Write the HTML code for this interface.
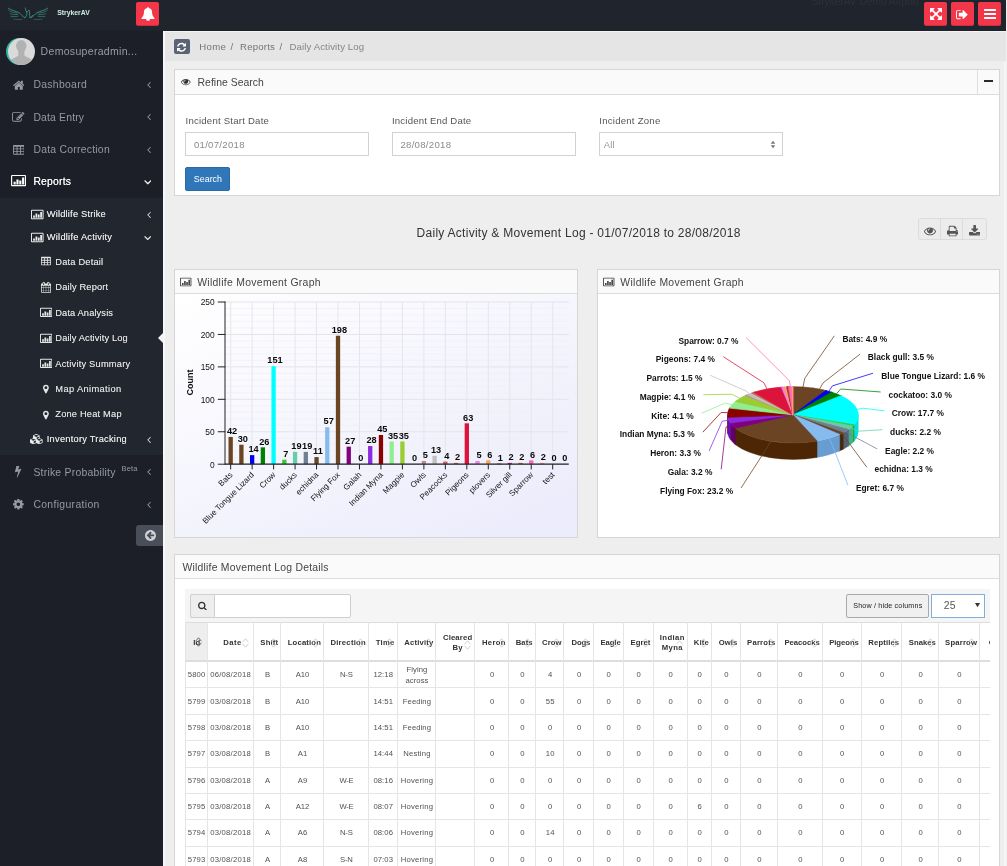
<!DOCTYPE html>
<html lang="en"><head><meta charset="utf-8"><title>StrykerAV - Daily Activity Log</title>
<style>
html,body{margin:0;padding:0}
body{width:1007px;height:866px;overflow:hidden;position:relative;background:#f1f1f1;font-family:"Liberation Sans",sans-serif;color:#444;-webkit-font-smoothing:antialiased}
*{box-sizing:border-box}
#wrap{position:absolute;left:0;top:0;width:1007px;height:866px;will-change:transform}
.abs,.ic,.t{position:absolute}
.t{white-space:nowrap;letter-spacing:.028em;line-height:1}
.b{font-weight:bold;letter-spacing:.01em}
#nav{position:absolute;left:0;top:0;width:1006px;height:31px;background:#20242d;border-bottom:1px solid #1e222b;overflow:hidden}
#side{position:absolute;left:0;top:31px;width:163px;height:835px;background:#1c1f28;overflow:hidden}
#main{position:absolute;left:164px;top:31px;width:842px;height:835px;background:#eeeeee;overflow:hidden}
.rbtn{position:absolute;top:2px;width:23px;height:23px;background:#f4364a;border-radius:2px;box-shadow:0 1px 0 #cc2e40}
.panel{position:absolute;background:#fff;border:1px solid #d6d6d6}
.ph{position:absolute;left:0;top:0;right:0;background:#fafafa;border-bottom:1px solid #dcdcdc}
.inp{position:absolute;height:23.5px;width:184px;border:1px solid #ccc;background:#fff}
</style></head><body><div id="wrap">
<div id="nav">
<svg class="ic" style="left:4px;top:2.8px" width="50" height="24" viewBox="0 0 1007 483"><g fill="none" stroke-linecap="round" stroke-linejoin="round"><g stroke="#41b9a0" stroke-width="13"><path d="M85 105 C150 150 230 160 300 195 C350 225 370 275 420 295"/><path d="M 880.0 105 C 815.0 150 735.0 160 665.0 195 C 615.0 225 595.0 275 545.0 295"/><path d="M420 295 C455 270 472 230 460 185 C440 150 425 125 430 100"/><path d="M460 185 C480 162 495 148 506 142 C520 180 514 240 520 295 C545 290 560 270 580 250"/></g><g stroke="#3aa892" stroke-width="10.5"><path d="M95 150 C150 185 200 195 262 200"/><path d="M125 215 C170 235 220 235 278 230"/><path d="M140 270 C180 277 230 277 278 268"/><path d="M 870.0 150 C 815.0 185 765.0 195 703.0 200"/><path d="M 840.0 215 C 795.0 235 745.0 235 687.0 230"/><path d="M 825.0 270 C 785.0 277 735.0 277 687.0 268"/></g><g stroke="#4f7b76" stroke-width="11"><path d="M200 325 C250 336 310 336 360 330"/><path d="M 765.0 325 C 715.0 336 655.0 336 605.0 330"/></g></g></svg>
<div class="t b" style="left:57.3px;top:9.9px;font-size:6.8px;color:#cdeee5;letter-spacing:0">StrykerAV</div>
<div class="rbtn" style="left:136px;width:23px"></div>
<svg class="ic" style="left:140.60px;top:7.40px;" width="14.00" height="14.00" viewBox="0 0 1792 1792"><path fill="#fff" d="M912 1696C912 1705 905 1712 896 1712C799 1712 720 1633 720 1536C720 1527 727 1520 736 1520C745 1520 752 1527 752 1536C752 1615 817 1680 896 1680C905 1680 912 1687 912 1696ZM1728 1408C1580 1283 1408 1059 1408 576C1408 384 1249 174 984 135C989 123 992 110 992 96C992 43 949 0 896 0C843 0 800 43 800 96C800 110 803 123 808 135C543 174 384 384 384 576C384 1059 212 1283 64 1408C64 1478 122 1536 192 1536H640C640 1677 755 1792 896 1792C1037 1792 1152 1677 1152 1536H1600C1670 1536 1728 1478 1728 1408Z"/></svg>
<div class="t" style="left:811.5px;top:-3.4px;font-size:10.2px;color:#2d313a;letter-spacing:0">StrykerAV Demo Airport</div>
<div class="rbtn" style="left:924px"></div>
<svg class="ic" style="left:929.50px;top:7.30px;" width="12.00" height="14.00" viewBox="0 0 1536 1792"><path fill="#fff" d="M1283 541 1427 685C1439 697 1455 704 1472 704C1480 704 1489 702 1497 699C1520 689 1536 666 1536 640V192C1536 157 1507 128 1472 128H1024C998 128 975 144 965 168C955 191 960 219 979 237L1123 381L768 736L413 381L557 237C576 219 581 191 571 168C561 144 538 128 512 128H64C29 128 0 157 0 192V640C0 666 16 689 40 699C47 702 56 704 64 704C81 704 97 697 109 685L253 541L608 896L253 1251L109 1107C91 1088 63 1083 40 1093C16 1103 0 1126 0 1152V1600C0 1635 29 1664 64 1664H512C538 1664 561 1648 571 1624C581 1601 576 1573 557 1555L413 1411L768 1056L1123 1411L979 1555C960 1573 955 1601 965 1624C975 1648 998 1664 1024 1664H1472C1507 1664 1536 1635 1536 1600V1152C1536 1126 1520 1103 1497 1093C1473 1083 1445 1088 1427 1107L1283 1251L928 896Z"/></svg>
<div class="rbtn" style="left:951px"></div>
<svg class="ic" style="left:956.37px;top:7.70px;" width="12.26" height="13.20" viewBox="0 0 1664 1792"><path fill="#fff" d="M640 1440C640 1403 601 1408 576 1408H288C200 1408 128 1336 128 1248V544C128 456 200 384 288 384H608C653 384 640 316 640 288C640 271 625 256 608 256H288C129 256 0 385 0 544V1248C0 1407 129 1536 288 1536H608C653 1536 640 1468 640 1440ZM1568 896C1568 879 1561 863 1549 851L1005 307C993 295 977 288 960 288C925 288 896 317 896 352V640H448C413 640 384 669 384 704V1088C384 1123 413 1152 448 1152H896V1440C896 1475 925 1504 960 1504C977 1504 993 1497 1005 1485L1549 941C1561 929 1568 913 1568 896Z"/></svg>
<div class="rbtn" style="left:978px"></div>
<svg class="ic" style="left:983.50px;top:7.30px;" width="12.00" height="14.00" viewBox="0 0 1536 1792"><path fill="#fff" d="M1536 1344C1536 1309 1507 1280 1472 1280H64C29 1280 0 1309 0 1344V1472C0 1507 29 1536 64 1536H1472C1507 1536 1536 1507 1536 1472ZM1536 832C1536 797 1507 768 1472 768H64C29 768 0 797 0 832V960C0 995 29 1024 64 1024H1472C1507 1024 1536 995 1536 960ZM1536 320C1536 285 1507 256 1472 256H64C29 256 0 285 0 320V448C0 483 29 512 64 512H1472C1507 512 1536 483 1536 448Z"/></svg>
</div>
<div id="side">
<div class="abs" style="left:5.8px;top:7px;width:27px;height:27px;border-radius:50%;background:#2fb5a0"></div>
<svg class="ic" style="left:8.2px;top:7px" width="27" height="27" viewBox="0 0 27 27">
<defs><clipPath id="avc"><circle cx="13.5" cy="13.5" r="13.5"/></clipPath></defs>
<circle cx="13.5" cy="13.5" r="13.5" fill="#dadada"/>
<g clip-path="url(#avc)" fill="#b2b2b2"><ellipse cx="13.3" cy="8" rx="5.2" ry="6.1"/><path d="M10.3 12 H16.400 V17.600 C19 20.200 24.500 20 25.600 24.500 V28 H1.400 V24.500 C2.500 20 8 20.200 10.300 17.600 Z"/></g></svg>
<div class="t" style="left:40.6px;top:15.48px;font-size:10.5px;color:#9a9da5;letter-spacing:0.313px;">Demosuperadmin...</div>
<div class="abs" style="left:0;top:166.6px;width:163px;height:257.6px;background:#22262f"></div>
<svg class="ic" style="left:12.80px;top:47.95px;" width="11.61" height="12.50" viewBox="0 0 1664 1792"><path fill="#9699a0" d="M1408 992C1408 990 1408 988 1407 986L832 512L257 986C257 988 256 990 256 992V1472C256 1507 285 1536 320 1536H704V1152H960V1536H1344C1379 1536 1408 1507 1408 1472ZM1631 923C1642 910 1640 889 1627 878L1408 696V288C1408 270 1394 256 1376 256H1184C1166 256 1152 270 1152 288V483L908 279C866 244 798 244 756 279L37 878C24 889 22 910 33 923L95 997C100 1003 108 1007 116 1008C125 1009 133 1006 140 1001L832 424L1524 1001C1530 1006 1537 1008 1545 1008C1546 1008 1547 1008 1548 1008C1556 1007 1564 1003 1569 997L1631 923Z"/></svg>
<div class="t" style="left:33.4px;top:49.23px;font-size:10.4px;color:#9699a0;letter-spacing:0.310px;">Dashboard</div>
<svg class="ic" style="left:146.64px;top:48.00px;" width="3.93" height="11.00" viewBox="0 0 640 1792"><path fill="#9699a0" d="M627 544C627 535 623 527 617 521L567 471C561 465 552 461 544 461C536 461 527 465 521 471L55 937C49 943 45 952 45 960C45 968 49 977 55 983L521 1449C527 1455 536 1459 544 1459C552 1459 561 1455 567 1449L617 1399C623 1393 627 1384 627 1376C627 1368 623 1359 617 1353L224 960L617 567C623 561 627 552 627 544Z"/></svg>
<svg class="ic" style="left:12.35px;top:80.25px;" width="12.50" height="12.50" viewBox="0 0 1792 1792"><path fill="#9699a0" d="M888 1184H832V1088H736V1032L852 916L1004 1068ZM1328 464C1337 473 1336 488 1327 497L977 847C968 856 953 857 944 848C935 839 936 824 945 815L1295 465C1304 456 1319 455 1328 464ZM1408 1058C1408 1045 1400 1034 1388 1029C1376 1024 1363 1026 1353 1036L1289 1100C1283 1106 1280 1114 1280 1122V1248C1280 1336 1208 1408 1120 1408H288C200 1408 128 1336 128 1248V416C128 328 200 256 288 256H1120C1135 256 1150 258 1165 262C1176 266 1188 263 1197 254L1246 205C1254 197 1257 187 1255 176C1253 166 1246 157 1237 153C1200 136 1160 128 1120 128H288C129 128 0 257 0 416V1248C0 1407 129 1536 288 1536H1120C1279 1536 1408 1407 1408 1248ZM1312 320 640 992V1280H928L1600 608ZM1756 452C1793 415 1793 353 1756 316L1604 164C1567 127 1505 127 1468 164L1376 256L1664 544L1756 452Z"/></svg>
<div class="t" style="left:33.4px;top:81.53px;font-size:10.4px;color:#9699a0;letter-spacing:0.171px;">Data Entry</div>
<svg class="ic" style="left:146.64px;top:80.30px;" width="3.93" height="11.00" viewBox="0 0 640 1792"><path fill="#9699a0" d="M627 544C627 535 623 527 617 521L567 471C561 465 552 461 544 461C536 461 527 465 521 471L55 937C49 943 45 952 45 960C45 968 49 977 55 983L521 1449C527 1455 536 1459 544 1459C552 1459 561 1455 567 1449L617 1399C623 1393 627 1384 627 1376C627 1368 623 1359 617 1353L224 960L617 567C623 561 627 552 627 544Z"/></svg>
<svg class="ic" style="left:12.80px;top:112.65px;" width="11.61" height="12.50" viewBox="0 0 1664 1792"><path fill="#9699a0" d="M512 1376C512 1394 498 1408 480 1408H160C142 1408 128 1394 128 1376V1184C128 1166 142 1152 160 1152H480C498 1152 512 1166 512 1184V1376ZM512 992C512 1010 498 1024 480 1024H160C142 1024 128 1010 128 992V800C128 782 142 768 160 768H480C498 768 512 782 512 800V992ZM1024 1376C1024 1394 1010 1408 992 1408H672C654 1408 640 1394 640 1376V1184C640 1166 654 1152 672 1152H992C1010 1152 1024 1166 1024 1184V1376ZM512 608C512 626 498 640 480 640H160C142 640 128 626 128 608V416C128 398 142 384 160 384H480C498 384 512 398 512 416V608ZM1024 992C1024 1010 1010 1024 992 1024H672C654 1024 640 1010 640 992V800C640 782 654 768 672 768H992C1010 768 1024 782 1024 800V992ZM1536 1376C1536 1394 1522 1408 1504 1408H1184C1166 1408 1152 1394 1152 1376V1184C1152 1166 1166 1152 1184 1152H1504C1522 1152 1536 1166 1536 1184V1376ZM1024 608C1024 626 1010 640 992 640H672C654 640 640 626 640 608V416C640 398 654 384 672 384H992C1010 384 1024 398 1024 416V608ZM1536 992C1536 1010 1522 1024 1504 1024H1184C1166 1024 1152 1010 1152 992V800C1152 782 1166 768 1184 768H1504C1522 768 1536 782 1536 800V992ZM1536 608C1536 626 1522 640 1504 640H1184C1166 640 1152 626 1152 608V416C1152 398 1166 384 1184 384H1504C1522 384 1536 398 1536 416V608ZM1664 288C1664 200 1592 128 1504 128H160C72 128 0 200 0 288V1376C0 1464 72 1536 160 1536H1504C1592 1536 1664 1464 1664 1376Z"/></svg>
<div class="t" style="left:33.4px;top:113.93px;font-size:10.4px;color:#9699a0;letter-spacing:0.252px;">Data Correction</div>
<svg class="ic" style="left:146.64px;top:112.70px;" width="3.93" height="11.00" viewBox="0 0 640 1792"><path fill="#9699a0" d="M627 544C627 535 623 527 617 521L567 471C561 465 552 461 544 461C536 461 527 465 521 471L55 937C49 943 45 952 45 960C45 968 49 977 55 983L521 1449C527 1455 536 1459 544 1459C552 1459 561 1455 567 1449L617 1399C623 1393 627 1384 627 1376C627 1368 623 1359 617 1353L224 960L617 567C623 561 627 552 627 544Z"/></svg>
<svg class="ic" style="left:11.16px;top:143.30px" width="15.09" height="13.20" viewBox="0 0 2048 1792"><path fill="#ffffff" fill-rule="evenodd" d="M160 128 h1728 q66 0 113 47 t47 113 v1216 q0 66 -47 113 t-113 47 h-1728 q-66 0 -113 -47 t-47 -113 v-1216 q0 -66 47 -113 t113 -47 z M192 288 q-13 0 -22.500 9.500 t-9.500 22.500 v1152 q0 13 9.500 22.500 t22.500 9.500 h1664 q13 0 22.500 -9.500 t9.500 -22.500 v-1152 q0 -13 -9.500 -22.500 t-22.500 -9.500 z M352 1056 h288 v384 h-288 z M736 736 h288 v704 h-288 z M1120 896 h288 v544 h-288 z M1504 480 h288 v960 h-288 z"/></svg>
<div class="t" style="left:33.4px;top:146.23px;font-size:10.4px;color:#ffffff;letter-spacing:0.197px;text-shadow:0 0 .6px rgba(255,255,255,.8);">Reports</div>
<svg class="ic" style="left:143.64px;top:144.90px;stroke:#ffffff;stroke-width:70" width="7.71" height="12.00" viewBox="0 0 1152 1792"><path fill="#ffffff" d="M1075 736C1075 728 1071 719 1065 713L1015 663C1009 657 1000 653 992 653C984 653 975 657 969 663L576 1056L183 663C177 657 168 653 160 653C151 653 143 657 137 663L87 713C81 719 77 728 77 736C77 744 81 753 87 759L553 1225C559 1231 568 1235 576 1235C584 1235 593 1231 599 1225L1065 759C1071 753 1075 744 1075 736Z"/></svg>
<svg class="ic" style="left:15.48px;top:434.35px;" width="6.25" height="12.50" viewBox="0 0 896 1792"><path fill="#9699a0" d="M885 566C876 557 864 551 851 551C847 551 843 552 839 553L443 651L614 188C617 182 619 176 619 170C619 147 599 128 574 128H246C225 128 207 141 202 160L1 985C-2 999 2 1014 14 1024C22 1031 34 1035 45 1035C49 1035 53 1035 57 1034L463 933L266 1741C261 1762 274 1783 296 1790C301 1791 306 1792 310 1792C328 1792 344 1782 352 1767L892 610C899 595 896 578 885 566Z"/></svg>
<div class="t" style="left:33.4px;top:436.53px;font-size:10.4px;color:#9699a0;letter-spacing:0.240px;">Strike Probability</div>
<svg class="ic" style="left:146.64px;top:435.30px;" width="3.93" height="11.00" viewBox="0 0 640 1792"><path fill="#9699a0" d="M627 544C627 535 623 527 617 521L567 471C561 465 552 461 544 461C536 461 527 465 521 471L55 937C49 943 45 952 45 960C45 968 49 977 55 983L521 1449C527 1455 536 1459 544 1459C552 1459 561 1455 567 1449L617 1399C623 1393 627 1384 627 1376C627 1368 623 1359 617 1353L224 960L617 567C623 561 627 552 627 544Z"/></svg>
<svg class="ic" style="left:13.24px;top:466.65px;" width="10.71" height="12.50" viewBox="0 0 1536 1792"><path fill="#9699a0" d="M1024 896C1024 1037 909 1152 768 1152C627 1152 512 1037 512 896C512 755 627 640 768 640C909 640 1024 755 1024 896ZM1536 787C1536 770 1524 754 1507 751L1324 723C1314 690 1300 657 1283 625C1317 578 1354 534 1388 488C1393 481 1396 474 1396 465C1396 457 1394 449 1389 443C1347 384 1277 322 1224 273C1217 267 1208 263 1199 263C1190 263 1181 266 1175 272L1033 379C1004 364 974 352 943 342L915 158C913 141 897 128 879 128H657C639 128 625 140 621 156C605 216 599 281 592 342C561 352 530 365 501 380L363 273C355 267 346 263 337 263C303 263 168 409 144 442C139 449 135 456 135 465C135 474 139 482 145 489C182 534 218 579 252 627C236 657 223 687 213 719L27 747C12 750 0 768 0 783V1005C0 1022 12 1038 29 1041L212 1068C222 1102 236 1135 253 1167C219 1214 182 1258 148 1304C143 1311 140 1318 140 1327C140 1335 142 1343 147 1350C189 1408 259 1470 312 1518C319 1525 328 1529 337 1529C346 1529 355 1526 362 1520L503 1413C532 1428 562 1440 593 1450L621 1634C623 1651 639 1664 657 1664H879C897 1664 911 1652 915 1636C931 1576 937 1511 944 1450C975 1440 1006 1427 1035 1412L1173 1520C1181 1525 1190 1529 1199 1529C1233 1529 1368 1382 1392 1350C1398 1343 1401 1336 1401 1327C1401 1318 1397 1309 1391 1302C1354 1257 1318 1213 1284 1164C1300 1135 1312 1105 1323 1073L1508 1045C1524 1042 1536 1024 1536 1009Z"/></svg>
<div class="t" style="left:33.4px;top:468.83px;font-size:10.4px;color:#9699a0;letter-spacing:0.344px;">Configuration</div>
<svg class="ic" style="left:146.64px;top:467.60px;" width="3.93" height="11.00" viewBox="0 0 640 1792"><path fill="#9699a0" d="M627 544C627 535 623 527 617 521L567 471C561 465 552 461 544 461C536 461 527 465 521 471L55 937C49 943 45 952 45 960C45 968 49 977 55 983L521 1449C527 1455 536 1459 544 1459C552 1459 561 1455 567 1449L617 1399C623 1393 627 1384 627 1376C627 1368 623 1359 617 1353L224 960L617 567C623 561 627 552 627 544Z"/></svg>
<div class="t" style="left:121.5px;top:433.73px;font-size:7.6px;color:#9699a0;letter-spacing:0.119px;">Beta</div>
<svg class="ic" style="left:31.11px;top:177.60px" width="12.57" height="11.00" viewBox="0 0 2048 1792"><path fill="#ececec" fill-rule="evenodd" d="M160 128 h1728 q66 0 113 47 t47 113 v1216 q0 66 -47 113 t-113 47 h-1728 q-66 0 -113 -47 t-47 -113 v-1216 q0 -66 47 -113 t113 -47 z M192 288 q-13 0 -22.500 9.500 t-9.500 22.500 v1152 q0 13 9.500 22.500 t22.500 9.500 h1664 q13 0 22.500 -9.500 t9.500 -22.500 v-1152 q0 -13 -9.500 -22.500 t-22.500 -9.500 z M352 1056 h288 v384 h-288 z M736 736 h288 v704 h-288 z M1120 896 h288 v544 h-288 z M1504 480 h288 v960 h-288 z"/></svg>
<div class="t" style="left:46.8px;top:179.30px;font-size:9.3px;color:#ececec;letter-spacing:0.185px;text-shadow:0 0 .5px rgba(255,255,255,.6);">Wildlife Strike</div>
<svg class="ic" style="left:146.64px;top:177.90px;" width="3.93" height="11.00" viewBox="0 0 640 1792"><path fill="#dcdcdc" d="M627 544C627 535 623 527 617 521L567 471C561 465 552 461 544 461C536 461 527 465 521 471L55 937C49 943 45 952 45 960C45 968 49 977 55 983L521 1449C527 1455 536 1459 544 1459C552 1459 561 1455 567 1449L617 1399C623 1393 627 1384 627 1376C627 1368 623 1359 617 1353L224 960L617 567C623 561 627 552 627 544Z"/></svg>
<svg class="ic" style="left:31.11px;top:200.70px" width="12.57" height="11.00" viewBox="0 0 2048 1792"><path fill="#ececec" fill-rule="evenodd" d="M160 128 h1728 q66 0 113 47 t47 113 v1216 q0 66 -47 113 t-113 47 h-1728 q-66 0 -113 -47 t-47 -113 v-1216 q0 -66 47 -113 t113 -47 z M192 288 q-13 0 -22.500 9.500 t-9.500 22.500 v1152 q0 13 9.500 22.500 t22.500 9.500 h1664 q13 0 22.500 -9.500 t9.500 -22.500 v-1152 q0 -13 -9.500 -22.500 t-22.500 -9.500 z M352 1056 h288 v384 h-288 z M736 736 h288 v704 h-288 z M1120 896 h288 v544 h-288 z M1504 480 h288 v960 h-288 z"/></svg>
<div class="t" style="left:46.8px;top:202.40px;font-size:9.3px;color:#ececec;letter-spacing:0.230px;text-shadow:0 0 .5px rgba(255,255,255,.6);">Wildlife Activity</div>
<svg class="ic" style="left:143.77px;top:201.00px;stroke:#ececec;stroke-width:60" width="7.46" height="11.60" viewBox="0 0 1152 1792"><path fill="#ececec" d="M1075 736C1075 728 1071 719 1065 713L1015 663C1009 657 1000 653 992 653C984 653 975 657 969 663L576 1056L183 663C177 657 168 653 160 653C151 653 143 657 137 663L87 713C81 719 77 728 77 736C77 744 81 753 87 759L553 1225C559 1231 568 1235 576 1235C584 1235 593 1231 599 1225L1065 759C1071 753 1075 744 1075 736Z"/></svg>
<svg class="ic" style="left:30.31px;top:402.70px;" width="13.37" height="10.40" viewBox="0 0 2304 1792"><path fill="#ececec" d="M640 1632V1290L1024 1126V1440ZM576 1178 172 1005 576 832 980 1005ZM1664 1632V1290L2048 1126V1440ZM1600 1178 1196 1005 1600 832 2004 1005ZM1152 885V618L1536 454V720ZM1088 506 647 317 1088 128 1529 317ZM2176 1024C2176 973 2146 927 2098 906L1664 720V320C1664 269 1633 223 1586 202L1138 10C1122 3 1105 0 1088 0C1071 0 1054 3 1038 10L590 202C543 223 512 269 512 320V720L78 906C31 927 0 973 0 1024V1440C0 1488 27 1533 71 1554L519 1778C537 1788 556 1792 576 1792C596 1792 615 1788 633 1778L1081 1554C1084 1553 1086 1552 1088 1550C1090 1552 1092 1553 1095 1554L1543 1778C1561 1788 1580 1792 1600 1792C1620 1792 1639 1788 1657 1778L2105 1554C2149 1533 2176 1488 2176 1440Z"/></svg>
<div class="t" style="left:46.8px;top:403.90px;font-size:9.3px;color:#ececec;letter-spacing:0.234px;text-shadow:0 0 .5px rgba(255,255,255,.6);">Inventory Tracking</div>
<svg class="ic" style="left:146.64px;top:402.50px;" width="3.93" height="11.00" viewBox="0 0 640 1792"><path fill="#dcdcdc" d="M627 544C627 535 623 527 617 521L567 471C561 465 552 461 544 461C536 461 527 465 521 471L55 937C49 943 45 952 45 960C45 968 49 977 55 983L521 1449C527 1455 536 1459 544 1459C552 1459 561 1455 567 1449L617 1399C623 1393 627 1384 627 1376C627 1368 623 1359 617 1353L224 960L617 567C623 561 627 552 627 544Z"/></svg>
<svg class="ic" style="left:40.79px;top:225.40px;" width="10.03" height="10.80" viewBox="0 0 1664 1792"><path fill="#e6e6e6" d="M512 1376C512 1394 498 1408 480 1408H160C142 1408 128 1394 128 1376V1184C128 1166 142 1152 160 1152H480C498 1152 512 1166 512 1184V1376ZM512 992C512 1010 498 1024 480 1024H160C142 1024 128 1010 128 992V800C128 782 142 768 160 768H480C498 768 512 782 512 800V992ZM1024 1376C1024 1394 1010 1408 992 1408H672C654 1408 640 1394 640 1376V1184C640 1166 654 1152 672 1152H992C1010 1152 1024 1166 1024 1184V1376ZM512 608C512 626 498 640 480 640H160C142 640 128 626 128 608V416C128 398 142 384 160 384H480C498 384 512 398 512 416V608ZM1024 992C1024 1010 1010 1024 992 1024H672C654 1024 640 1010 640 992V800C640 782 654 768 672 768H992C1010 768 1024 782 1024 800V992ZM1536 1376C1536 1394 1522 1408 1504 1408H1184C1166 1408 1152 1394 1152 1376V1184C1152 1166 1166 1152 1184 1152H1504C1522 1152 1536 1166 1536 1184V1376ZM1024 608C1024 626 1010 640 992 640H672C654 640 640 626 640 608V416C640 398 654 384 672 384H992C1010 384 1024 398 1024 416V608ZM1536 992C1536 1010 1522 1024 1504 1024H1184C1166 1024 1152 1010 1152 992V800C1152 782 1166 768 1184 768H1504C1522 768 1536 782 1536 800V992ZM1536 608C1536 626 1522 640 1504 640H1184C1166 640 1152 626 1152 608V416C1152 398 1166 384 1184 384H1504C1522 384 1536 398 1536 416V608ZM1664 288C1664 200 1592 128 1504 128H160C72 128 0 200 0 288V1376C0 1464 72 1536 160 1536H1504C1592 1536 1664 1464 1664 1376Z"/></svg>
<div class="t" style="left:55.3px;top:226.50px;font-size:9.3px;color:#e6e6e6;letter-spacing:0.178px;text-shadow:0 0 .5px rgba(255,255,255,.5);">Data Detail</div>
<svg class="ic" style="left:40.79px;top:251.20px;" width="10.03" height="10.80" viewBox="0 0 1664 1792"><path fill="#e6e6e6" d="M128 1664V1376H416V1664ZM480 1664V1376H800V1664ZM128 1312V992H416V1312ZM480 1312V992H800V1312ZM128 928V640H416V928ZM864 1664V1376H1184V1664ZM480 928V640H800V928ZM1248 1664V1376H1536V1664ZM864 1312V992H1184V1312ZM512 448C512 465 497 480 480 480H416C399 480 384 465 384 448V160C384 143 399 128 416 128H480C497 128 512 143 512 160V448ZM1248 1312V992H1536V1312ZM864 928V640H1184V928ZM1248 928V640H1536V928ZM1280 448C1280 465 1265 480 1248 480H1184C1167 480 1152 465 1152 448V160C1152 143 1167 128 1184 128H1248C1265 128 1280 143 1280 160V448ZM1664 384C1664 314 1606 256 1536 256H1408V160C1408 72 1336 0 1248 0H1184C1096 0 1024 72 1024 160V256H640V160C640 72 568 0 480 0H416C328 0 256 72 256 160V256H128C58 256 0 314 0 384V1664C0 1734 58 1792 128 1792H1536C1606 1792 1664 1734 1664 1664Z"/></svg>
<div class="t" style="left:55.3px;top:252.30px;font-size:9.3px;color:#e6e6e6;letter-spacing:0.157px;text-shadow:0 0 .5px rgba(255,255,255,.5);">Daily Report</div>
<svg class="ic" style="left:39.63px;top:276.10px" width="12.34" height="10.80" viewBox="0 0 2048 1792"><path fill="#e6e6e6" fill-rule="evenodd" d="M160 128 h1728 q66 0 113 47 t47 113 v1216 q0 66 -47 113 t-113 47 h-1728 q-66 0 -113 -47 t-47 -113 v-1216 q0 -66 47 -113 t113 -47 z M192 288 q-13 0 -22.500 9.500 t-9.500 22.500 v1152 q0 13 9.500 22.500 t22.500 9.500 h1664 q13 0 22.500 -9.500 t9.500 -22.500 v-1152 q0 -13 -9.500 -22.500 t-22.500 -9.500 z M352 1056 h288 v384 h-288 z M736 736 h288 v704 h-288 z M1120 896 h288 v544 h-288 z M1504 480 h288 v960 h-288 z"/></svg>
<div class="t" style="left:55.3px;top:277.70px;font-size:9.3px;color:#e6e6e6;letter-spacing:0.111px;text-shadow:0 0 .5px rgba(255,255,255,.5);">Data Analysis</div>
<svg class="ic" style="left:39.63px;top:301.60px" width="12.34" height="10.80" viewBox="0 0 2048 1792"><path fill="#e6e6e6" fill-rule="evenodd" d="M160 128 h1728 q66 0 113 47 t47 113 v1216 q0 66 -47 113 t-113 47 h-1728 q-66 0 -113 -47 t-47 -113 v-1216 q0 -66 47 -113 t113 -47 z M192 288 q-13 0 -22.500 9.500 t-9.500 22.500 v1152 q0 13 9.500 22.500 t22.500 9.500 h1664 q13 0 22.500 -9.500 t9.500 -22.500 v-1152 q0 -13 -9.500 -22.500 t-22.500 -9.500 z M352 1056 h288 v384 h-288 z M736 736 h288 v704 h-288 z M1120 896 h288 v544 h-288 z M1504 480 h288 v960 h-288 z"/></svg>
<div class="t" style="left:55.3px;top:303.20px;font-size:9.3px;color:#e6e6e6;letter-spacing:0.126px;text-shadow:0 0 .5px rgba(255,255,255,.5);">Daily Activity Log</div>
<svg class="ic" style="left:39.63px;top:327.00px" width="12.34" height="10.80" viewBox="0 0 2048 1792"><path fill="#e6e6e6" fill-rule="evenodd" d="M160 128 h1728 q66 0 113 47 t47 113 v1216 q0 66 -47 113 t-113 47 h-1728 q-66 0 -113 -47 t-47 -113 v-1216 q0 -66 47 -113 t113 -47 z M192 288 q-13 0 -22.500 9.500 t-9.500 22.500 v1152 q0 13 9.500 22.500 t22.500 9.500 h1664 q13 0 22.500 -9.500 t9.500 -22.500 v-1152 q0 -13 -9.500 -22.500 t-22.500 -9.500 z M352 1056 h288 v384 h-288 z M736 736 h288 v704 h-288 z M1120 896 h288 v544 h-288 z M1504 480 h288 v960 h-288 z"/></svg>
<div class="t" style="left:55.3px;top:328.60px;font-size:9.3px;color:#e6e6e6;letter-spacing:0.200px;text-shadow:0 0 .5px rgba(255,255,255,.5);">Activity Summary</div>
<svg class="ic" style="left:42.89px;top:353.20px;" width="5.83" height="10.20" viewBox="0 0 1024 1792"><path fill="#e6e6e6" d="M768 640C768 781 653 896 512 896C371 896 256 781 256 640C256 499 371 384 512 384C653 384 768 499 768 640ZM1024 640C1024 357 795 128 512 128C229 128 0 357 0 640C0 701 7 764 33 819L398 1593C418 1637 464 1664 512 1664C560 1664 606 1637 627 1593L991 819C1017 764 1024 701 1024 640Z"/></svg>
<div class="t" style="left:55.3px;top:354.00px;font-size:9.3px;color:#e6e6e6;letter-spacing:0.369px;text-shadow:0 0 .5px rgba(255,255,255,.5);">Map Animation</div>
<svg class="ic" style="left:42.89px;top:378.60px;" width="5.83" height="10.20" viewBox="0 0 1024 1792"><path fill="#e6e6e6" d="M768 640C768 781 653 896 512 896C371 896 256 781 256 640C256 499 371 384 512 384C653 384 768 499 768 640ZM1024 640C1024 357 795 128 512 128C229 128 0 357 0 640C0 701 7 764 33 819L398 1593C418 1637 464 1664 512 1664C560 1664 606 1637 627 1593L991 819C1017 764 1024 701 1024 640Z"/></svg>
<div class="t" style="left:55.3px;top:379.40px;font-size:9.3px;color:#e6e6e6;letter-spacing:0.181px;text-shadow:0 0 .5px rgba(255,255,255,.5);">Zone Heat Map</div>
<div class="abs" style="left:158.2px;top:302.2px;width:0;height:0;border-top:5px solid transparent;border-bottom:5px solid transparent;border-right:5px solid #f1f1f1"></div>
<div class="abs" style="left:136px;top:494px;width:27px;height:21px;background:#4a4e59;border-radius:3px 0 0 3px"></div>
<svg class="ic" style="left:144.71px;top:498.20px;" width="10.97" height="12.80" viewBox="0 0 1536 1792"><path fill="#cfd0d4" d="M1280 960C1280 995 1251 1024 1216 1024H714L903 1213C915 1225 921 1241 921 1258C921 1275 915 1291 903 1303L812 1394C800 1406 784 1412 767 1412C750 1412 734 1406 722 1394L360 1032L269 941C257 929 251 913 251 896C251 879 257 863 269 851L360 760L722 398C734 386 750 380 767 380C784 380 800 386 812 398L903 489C915 501 922 517 922 534C922 551 915 567 903 579L714 768H1216C1251 768 1280 797 1280 832V960ZM1536 896C1536 472 1192 128 768 128C344 128 0 472 0 896C0 1320 344 1664 768 1664C1192 1664 1536 1320 1536 896Z"/></svg>
</div>
<div class="abs" style="left:163px;top:31px;width:1px;height:835px;background:#f6f6f6"></div>
<div id="main">
<div class="abs" style="left:0.00px;top:0.00px;width:842.00px;height:30.00px;background:#e5e5e5"></div>
<div class="abs" style="left:0.00px;top:0.00px;width:1.00px;height:835.00px;background:#f7f7f7"></div>
<div class="abs" style="left:0.00px;top:0.00px;width:842.00px;height:1.00px;background:#f3f3f3"></div>
<div class="abs" style="left:840.00px;top:31.00px;width:2.00px;height:804.00px;background:#f5f5f5"></div>
<div class="abs" style="left:9.60px;top:8.40px;width:16.20px;height:14.20px;background:#5a6276;border-radius:2px"></div>
<svg class="ic" style="left:13.16px;top:10.70px;" width="9.09" height="10.60" viewBox="0 0 1536 1792"><path fill="#fff" d="M1511 1056C1511 1039 1497 1024 1479 1024H1287C1272 1024 1262 1033 1257 1047C1240 1087 1228 1125 1204 1164C1111 1316 946 1408 768 1408C639 1408 514 1358 420 1270L557 1133C569 1121 576 1105 576 1088C576 1053 547 1024 512 1024H64C29 1024 0 1053 0 1088V1536C0 1571 29 1600 64 1600C81 1600 97 1593 109 1581L238 1452C380 1587 569 1664 764 1664C1133 1664 1425 1417 1510 1063C1511 1061 1511 1058 1511 1056ZM1536 256C1536 221 1507 192 1472 192C1455 192 1439 199 1427 211L1297 340C1155 206 964 128 768 128C399 128 104 374 18 729C18 731 18 734 18 736C18 753 32 768 50 768H249C264 768 274 759 279 745C296 705 308 667 332 628C425 476 590 384 768 384C897 384 1022 433 1117 521L979 659C967 671 960 687 960 704C960 739 989 768 1024 768H1472C1507 768 1536 739 1536 704Z"/></svg>
<div class="t" style="left:35.20px;top:11.37px;font-size:9.6px;color:#747474;letter-spacing:0.381px;">Home</div>
<div class="t" style="left:66.40px;top:11.37px;font-size:9.6px;color:#747474;letter-spacing:0.852px;">/</div>
<div class="t" style="left:76.10px;top:11.37px;font-size:9.6px;color:#747474;letter-spacing:0.181px;">Reports</div>
<div class="t" style="left:115.60px;top:11.37px;font-size:9.6px;color:#747474;letter-spacing:0.852px;">/</div>
<div class="t" style="left:125.40px;top:11.37px;font-size:9.6px;color:#858585;letter-spacing:0.130px;">Daily Activity Log</div>
<div class="panel" style="left:10.00px;top:38.00px;width:826.00px;height:126.60px"><div class="ph" style="height:25.20px"></div></div>
<svg class="ic" style="left:17.20px;top:46.20px;" width="9.60" height="9.60" viewBox="0 0 1792 1792"><path fill="#333" d="M1664 960C1493 1224 1217 1408 896 1408C575 1408 299 1224 128 960C223 813 353 687 509 607C469 675 448 753 448 832C448 1079 649 1280 896 1280C1143 1280 1344 1079 1344 832C1344 753 1323 675 1283 607C1439 687 1569 813 1664 960ZM944 576C944 602 922 624 896 624C782 624 688 718 688 832C688 858 666 880 640 880C614 880 592 858 592 832C592 665 729 528 896 528C922 528 944 550 944 576ZM1792 960C1792 935 1784 912 1772 891C1588 589 1251 384 896 384C541 384 204 589 20 891C8 912 0 935 0 960C0 985 8 1008 20 1029C204 1331 541 1536 896 1536C1251 1536 1588 1332 1772 1029C1784 1008 1792 985 1792 960Z"/></svg>
<div class="t" style="left:33.60px;top:46.53px;font-size:10.4px;color:#444;letter-spacing:0.025px;">Refine Search</div>
<div class="abs" style="left:813.00px;top:39.00px;width:1.00px;height:24.00px;background:#e0e0e0"></div>
<div class="abs" style="left:820.00px;top:49.30px;width:9.00px;height:2.20px;background:#2a2a2a"></div>
<div class="t" style="left:21.50px;top:85.17px;font-size:9.6px;color:#555;letter-spacing:0.217px;">Incident Start Date</div>
<div class="abs" style="left:21.30px;top:101.40px;width:184.00px;height:23.50px;background:#fff;border:1px solid #d2d2d2"></div>
<div class="t" style="left:29.90px;top:109.47px;font-size:9.6px;color:#8a8a8a;letter-spacing:0.291px;">01/07/2018</div>
<div class="t" style="left:228.00px;top:85.17px;font-size:9.6px;color:#555;letter-spacing:0.179px;">Incident End Date</div>
<div class="abs" style="left:227.80px;top:101.40px;width:184.00px;height:23.50px;background:#fff;border:1px solid #d2d2d2"></div>
<div class="t" style="left:236.40px;top:109.47px;font-size:9.6px;color:#8a8a8a;letter-spacing:0.291px;">28/08/2018</div>
<div class="t" style="left:435.30px;top:85.17px;font-size:9.6px;color:#555;letter-spacing:0.233px;">Incident Zone</div>
<div class="abs" style="left:435.10px;top:101.40px;width:184.00px;height:23.50px;background:#fff;border:1px solid #d2d2d2"></div>
<div class="t" style="left:439.70px;top:109.47px;font-size:9.6px;color:#999;letter-spacing:0.083px;">All</div>
<svg class="ic" style="left:605.60px;top:109px" width="6" height="9" viewBox="0 0 6 9"><path fill="#777" d="M3 0.800 L5.300 3.700 H0.700 z M3 8.200 L5.300 5.300 H0.700 z"/></svg>
<div class="abs" style="left:21.30px;top:136.20px;width:45.10px;height:23.60px;background:#2f77b8;border:1px solid #2a69a4;border-radius:2px"></div>
<div class="t" style="left:-156.10px;width:400px;text-align:center;top:144.17px;font-size:8.9px;color:#fff;letter-spacing:-0.003px;">Search</div>
<div class="t" style="left:214.60px;width:400px;text-align:center;top:196.44px;font-size:12px;color:#333;letter-spacing:0.271px;">Daily Activity &amp; Movement Log - 01/07/2018 to 28/08/2018</div>
<div class="abs" style="left:753.60px;top:187.40px;width:69.20px;height:22.00px;background:#ececec;border:1px solid #dcdcdc;border-radius:3px"></div>
<div class="abs" style="left:775.50px;top:188.40px;width:1.00px;height:20.00px;background:#dcdcdc"></div>
<div class="abs" style="left:797.50px;top:188.40px;width:1.00px;height:20.00px;background:#dcdcdc"></div>
<svg class="ic" style="left:759.80px;top:193.60px;" width="12.00" height="12.00" viewBox="0 0 1792 1792"><path fill="#555" d="M1664 960C1493 1224 1217 1408 896 1408C575 1408 299 1224 128 960C223 813 353 687 509 607C469 675 448 753 448 832C448 1079 649 1280 896 1280C1143 1280 1344 1079 1344 832C1344 753 1323 675 1283 607C1439 687 1569 813 1664 960ZM944 576C944 602 922 624 896 624C782 624 688 718 688 832C688 858 666 880 640 880C614 880 592 858 592 832C592 665 729 528 896 528C922 528 944 550 944 576ZM1792 960C1792 935 1784 912 1772 891C1588 589 1251 384 896 384C541 384 204 589 20 891C8 912 0 935 0 960C0 985 8 1008 20 1029C204 1331 541 1536 896 1536C1251 1536 1588 1332 1772 1029C1784 1008 1792 985 1792 960Z"/></svg>
<svg class="ic" style="left:782.84px;top:193.50px;" width="11.33" height="12.20" viewBox="0 0 1664 1792"><path fill="#555" d="M384 1536V1280H1280V1536ZM384 896V256H1024V416C1024 469 1067 512 1120 512H1280V896ZM1536 960C1536 995 1507 1024 1472 1024C1437 1024 1408 995 1408 960C1408 925 1437 896 1472 896C1507 896 1536 925 1536 960ZM1664 960C1664 855 1577 768 1472 768H1408V512C1408 459 1378 386 1340 348L1188 196C1150 158 1077 128 1024 128H352C299 128 256 171 256 224V768H192C87 768 0 855 0 960V1376C0 1393 15 1408 32 1408H256V1568C256 1621 299 1664 352 1664H1312C1365 1664 1408 1621 1408 1568V1408H1632C1649 1408 1664 1393 1664 1376Z"/></svg>
<svg class="ic" style="left:804.94px;top:193.50px;" width="11.33" height="12.20" viewBox="0 0 1664 1792"><path fill="#555" d="M1280 1344C1280 1379 1251 1408 1216 1408C1181 1408 1152 1379 1152 1344C1152 1309 1181 1280 1216 1280C1251 1280 1280 1309 1280 1344ZM1536 1344C1536 1379 1507 1408 1472 1408C1437 1408 1408 1379 1408 1344C1408 1309 1437 1280 1472 1280C1507 1280 1536 1309 1536 1344ZM1664 1120C1664 1067 1621 1024 1568 1024H1104L968 1160C931 1196 883 1216 832 1216C781 1216 733 1196 696 1160L561 1024H96C43 1024 0 1067 0 1120V1440C0 1493 43 1536 96 1536H1568C1621 1536 1664 1493 1664 1440ZM1339 551C1329 528 1306 512 1280 512H1024V64C1024 29 995 0 960 0H704C669 0 640 29 640 64V512H384C358 512 335 528 325 551C315 575 320 603 339 621L787 1069C799 1082 816 1088 832 1088C848 1088 865 1082 877 1069L1325 621C1344 603 1349 575 1339 551Z"/></svg>
<div class="panel" style="left:10.00px;top:237.60px;width:404.00px;height:269.40px"><div class="ph" style="height:24.40px"></div></div>
<svg class="ic" style="left:16.29px;top:245.60px" width="11.43" height="10.00" viewBox="0 0 2048 1792"><path fill="#444" fill-rule="evenodd" d="M160 128 h1728 q66 0 113 47 t47 113 v1216 q0 66 -47 113 t-113 47 h-1728 q-66 0 -113 -47 t-47 -113 v-1216 q0 -66 47 -113 t113 -47 z M192 288 q-13 0 -22.500 9.500 t-9.500 22.500 v1152 q0 13 9.500 22.500 t22.500 9.500 h1664 q13 0 22.500 -9.500 t9.500 -22.500 v-1152 q0 -13 -9.500 -22.500 t-22.500 -9.500 z M352 1056 h288 v384 h-288 z M736 736 h288 v704 h-288 z M1120 896 h288 v544 h-288 z M1504 480 h288 v960 h-288 z"/></svg>
<div class="t" style="left:33.20px;top:246.83px;font-size:10.4px;color:#444;letter-spacing:0.304px;">Wildlife Movement Graph</div>
<svg class="ic" style="left:11.00px;top:263.00px" width="402.00" height="243.00" viewBox="175 294 402.00 243.00">
<defs><linearGradient id="bg1" x1="0" y1="0" x2="0.8" y2="1"><stop offset="0" stop-color="#ffffff"/><stop offset="1" stop-color="#ececfc"/></linearGradient></defs>
<rect x="175" y="294" width="402" height="243" fill="url(#bg1)"/>
<line x1="225.3" y1="464.20" x2="568.8" y2="464.20" stroke="#e3e3eb" stroke-width="1"/>
<line x1="225.3" y1="457.71" x2="568.8" y2="457.71" stroke="#f0f0f6" stroke-width="0.8"/>
<line x1="225.3" y1="451.22" x2="568.8" y2="451.22" stroke="#f0f0f6" stroke-width="0.8"/>
<line x1="225.3" y1="444.74" x2="568.8" y2="444.74" stroke="#f0f0f6" stroke-width="0.8"/>
<line x1="225.3" y1="438.25" x2="568.8" y2="438.25" stroke="#f0f0f6" stroke-width="0.8"/>
<line x1="225.3" y1="431.76" x2="568.8" y2="431.76" stroke="#e3e3eb" stroke-width="1"/>
<line x1="225.3" y1="425.27" x2="568.8" y2="425.27" stroke="#f0f0f6" stroke-width="0.8"/>
<line x1="225.3" y1="418.78" x2="568.8" y2="418.78" stroke="#f0f0f6" stroke-width="0.8"/>
<line x1="225.3" y1="412.30" x2="568.8" y2="412.30" stroke="#f0f0f6" stroke-width="0.8"/>
<line x1="225.3" y1="405.81" x2="568.8" y2="405.81" stroke="#f0f0f6" stroke-width="0.8"/>
<line x1="225.3" y1="399.32" x2="568.8" y2="399.32" stroke="#e3e3eb" stroke-width="1"/>
<line x1="225.3" y1="392.83" x2="568.8" y2="392.83" stroke="#f0f0f6" stroke-width="0.8"/>
<line x1="225.3" y1="386.34" x2="568.8" y2="386.34" stroke="#f0f0f6" stroke-width="0.8"/>
<line x1="225.3" y1="379.86" x2="568.8" y2="379.86" stroke="#f0f0f6" stroke-width="0.8"/>
<line x1="225.3" y1="373.37" x2="568.8" y2="373.37" stroke="#f0f0f6" stroke-width="0.8"/>
<line x1="225.3" y1="366.88" x2="568.8" y2="366.88" stroke="#e3e3eb" stroke-width="1"/>
<line x1="225.3" y1="360.39" x2="568.8" y2="360.39" stroke="#f0f0f6" stroke-width="0.8"/>
<line x1="225.3" y1="353.90" x2="568.8" y2="353.90" stroke="#f0f0f6" stroke-width="0.8"/>
<line x1="225.3" y1="347.42" x2="568.8" y2="347.42" stroke="#f0f0f6" stroke-width="0.8"/>
<line x1="225.3" y1="340.93" x2="568.8" y2="340.93" stroke="#f0f0f6" stroke-width="0.8"/>
<line x1="225.3" y1="334.44" x2="568.8" y2="334.44" stroke="#e3e3eb" stroke-width="1"/>
<line x1="225.3" y1="327.95" x2="568.8" y2="327.95" stroke="#f0f0f6" stroke-width="0.8"/>
<line x1="225.3" y1="321.46" x2="568.8" y2="321.46" stroke="#f0f0f6" stroke-width="0.8"/>
<line x1="225.3" y1="314.98" x2="568.8" y2="314.98" stroke="#f0f0f6" stroke-width="0.8"/>
<line x1="225.3" y1="308.49" x2="568.8" y2="308.49" stroke="#f0f0f6" stroke-width="0.8"/>
<line x1="225.3" y1="302.00" x2="568.8" y2="302.00" stroke="#e3e3eb" stroke-width="1"/>
<line x1="230.67" y1="302.0" x2="230.67" y2="464.2" stroke="#e5e5ed" stroke-width="1"/>
<line x1="230.67" y1="464.2" x2="230.67" y2="469.4" stroke="#222" stroke-width="1"/>
<line x1="252.14" y1="302.0" x2="252.14" y2="464.2" stroke="#e5e5ed" stroke-width="1"/>
<line x1="252.14" y1="464.2" x2="252.14" y2="469.4" stroke="#222" stroke-width="1"/>
<line x1="273.60" y1="302.0" x2="273.60" y2="464.2" stroke="#e5e5ed" stroke-width="1"/>
<line x1="273.60" y1="464.2" x2="273.60" y2="469.4" stroke="#222" stroke-width="1"/>
<line x1="295.07" y1="302.0" x2="295.07" y2="464.2" stroke="#e5e5ed" stroke-width="1"/>
<line x1="295.07" y1="464.2" x2="295.07" y2="469.4" stroke="#222" stroke-width="1"/>
<line x1="316.54" y1="302.0" x2="316.54" y2="464.2" stroke="#e5e5ed" stroke-width="1"/>
<line x1="316.54" y1="464.2" x2="316.54" y2="469.4" stroke="#222" stroke-width="1"/>
<line x1="338.01" y1="302.0" x2="338.01" y2="464.2" stroke="#e5e5ed" stroke-width="1"/>
<line x1="338.01" y1="464.2" x2="338.01" y2="469.4" stroke="#222" stroke-width="1"/>
<line x1="359.48" y1="302.0" x2="359.48" y2="464.2" stroke="#e5e5ed" stroke-width="1"/>
<line x1="359.48" y1="464.2" x2="359.48" y2="469.4" stroke="#222" stroke-width="1"/>
<line x1="380.95" y1="302.0" x2="380.95" y2="464.2" stroke="#e5e5ed" stroke-width="1"/>
<line x1="380.95" y1="464.2" x2="380.95" y2="469.4" stroke="#222" stroke-width="1"/>
<line x1="402.42" y1="302.0" x2="402.42" y2="464.2" stroke="#e5e5ed" stroke-width="1"/>
<line x1="402.42" y1="464.2" x2="402.42" y2="469.4" stroke="#222" stroke-width="1"/>
<line x1="423.89" y1="302.0" x2="423.89" y2="464.2" stroke="#e5e5ed" stroke-width="1"/>
<line x1="423.89" y1="464.2" x2="423.89" y2="469.4" stroke="#222" stroke-width="1"/>
<line x1="445.35" y1="302.0" x2="445.35" y2="464.2" stroke="#e5e5ed" stroke-width="1"/>
<line x1="445.35" y1="464.2" x2="445.35" y2="469.4" stroke="#222" stroke-width="1"/>
<line x1="466.82" y1="302.0" x2="466.82" y2="464.2" stroke="#e5e5ed" stroke-width="1"/>
<line x1="466.82" y1="464.2" x2="466.82" y2="469.4" stroke="#222" stroke-width="1"/>
<line x1="488.29" y1="302.0" x2="488.29" y2="464.2" stroke="#e5e5ed" stroke-width="1"/>
<line x1="488.29" y1="464.2" x2="488.29" y2="469.4" stroke="#222" stroke-width="1"/>
<line x1="509.76" y1="302.0" x2="509.76" y2="464.2" stroke="#e5e5ed" stroke-width="1"/>
<line x1="509.76" y1="464.2" x2="509.76" y2="469.4" stroke="#222" stroke-width="1"/>
<line x1="531.23" y1="302.0" x2="531.23" y2="464.2" stroke="#e5e5ed" stroke-width="1"/>
<line x1="531.23" y1="464.2" x2="531.23" y2="469.4" stroke="#222" stroke-width="1"/>
<line x1="552.70" y1="302.0" x2="552.70" y2="464.2" stroke="#e5e5ed" stroke-width="1"/>
<line x1="552.70" y1="464.2" x2="552.70" y2="469.4" stroke="#222" stroke-width="1"/>
<rect x="228.52" y="436.95" width="4.3" height="27.25" fill="#6b4423"/>
<text x="232.07" y="434.15" text-anchor="middle" font-family="Liberation Sans, sans-serif" font-size="9.2" font-weight="bold" fill="#0a0a0a">42</text>
<rect x="239.25" y="444.74" width="4.3" height="19.46" fill="#6b4423"/>
<text x="242.80" y="441.94" text-anchor="middle" font-family="Liberation Sans, sans-serif" font-size="9.2" font-weight="bold" fill="#0a0a0a">30</text>
<rect x="249.99" y="455.12" width="4.3" height="9.08" fill="#0000f5"/>
<text x="253.54" y="452.32" text-anchor="middle" font-family="Liberation Sans, sans-serif" font-size="9.2" font-weight="bold" fill="#0a0a0a">14</text>
<rect x="260.72" y="447.33" width="4.3" height="16.87" fill="#008000"/>
<text x="264.27" y="444.53" text-anchor="middle" font-family="Liberation Sans, sans-serif" font-size="9.2" font-weight="bold" fill="#0a0a0a">26</text>
<rect x="271.45" y="366.23" width="4.3" height="97.97" fill="#00ffff"/>
<text x="275.00" y="363.43" text-anchor="middle" font-family="Liberation Sans, sans-serif" font-size="9.2" font-weight="bold" fill="#0a0a0a">151</text>
<rect x="282.19" y="459.66" width="4.3" height="4.54" fill="#32cd32"/>
<text x="285.74" y="456.86" text-anchor="middle" font-family="Liberation Sans, sans-serif" font-size="9.2" font-weight="bold" fill="#0a0a0a">7</text>
<rect x="292.92" y="451.87" width="4.3" height="12.33" fill="#66cdaa"/>
<text x="296.47" y="449.07" text-anchor="middle" font-family="Liberation Sans, sans-serif" font-size="9.2" font-weight="bold" fill="#0a0a0a">19</text>
<rect x="303.66" y="451.87" width="4.3" height="12.33" fill="#708090"/>
<text x="307.21" y="449.07" text-anchor="middle" font-family="Liberation Sans, sans-serif" font-size="9.2" font-weight="bold" fill="#0a0a0a">19</text>
<rect x="314.39" y="457.06" width="4.3" height="7.14" fill="#6b4423"/>
<text x="317.94" y="454.26" text-anchor="middle" font-family="Liberation Sans, sans-serif" font-size="9.2" font-weight="bold" fill="#0a0a0a">11</text>
<rect x="325.13" y="427.22" width="4.3" height="36.98" fill="#85bbee"/>
<text x="328.68" y="424.42" text-anchor="middle" font-family="Liberation Sans, sans-serif" font-size="9.2" font-weight="bold" fill="#0a0a0a">57</text>
<rect x="335.86" y="335.74" width="4.3" height="128.46" fill="#6b4423"/>
<text x="339.41" y="332.94" text-anchor="middle" font-family="Liberation Sans, sans-serif" font-size="9.2" font-weight="bold" fill="#0a0a0a">198</text>
<rect x="346.60" y="446.68" width="4.3" height="17.52" fill="#800080"/>
<text x="350.15" y="443.88" text-anchor="middle" font-family="Liberation Sans, sans-serif" font-size="9.2" font-weight="bold" fill="#0a0a0a">27</text>
<text x="360.88" y="461.40" text-anchor="middle" font-family="Liberation Sans, sans-serif" font-size="9.2" font-weight="bold" fill="#0a0a0a">0</text>
<rect x="368.06" y="446.03" width="4.3" height="18.17" fill="#8a2be2"/>
<text x="371.61" y="443.23" text-anchor="middle" font-family="Liberation Sans, sans-serif" font-size="9.2" font-weight="bold" fill="#0a0a0a">28</text>
<rect x="378.80" y="435.00" width="4.3" height="29.20" fill="#8b0000"/>
<text x="382.35" y="432.20" text-anchor="middle" font-family="Liberation Sans, sans-serif" font-size="9.2" font-weight="bold" fill="#0a0a0a">45</text>
<rect x="389.53" y="441.49" width="4.3" height="22.71" fill="#90ee90"/>
<text x="393.08" y="438.69" text-anchor="middle" font-family="Liberation Sans, sans-serif" font-size="9.2" font-weight="bold" fill="#0a0a0a">35</text>
<rect x="400.27" y="441.49" width="4.3" height="22.71" fill="#9acd32"/>
<text x="403.82" y="438.69" text-anchor="middle" font-family="Liberation Sans, sans-serif" font-size="9.2" font-weight="bold" fill="#0a0a0a">35</text>
<text x="414.55" y="461.40" text-anchor="middle" font-family="Liberation Sans, sans-serif" font-size="9.2" font-weight="bold" fill="#0a0a0a">0</text>
<rect x="421.74" y="460.96" width="4.3" height="3.24" fill="#bc8f8f"/>
<text x="425.29" y="458.16" text-anchor="middle" font-family="Liberation Sans, sans-serif" font-size="9.2" font-weight="bold" fill="#0a0a0a">5</text>
<rect x="432.47" y="455.77" width="4.3" height="8.43" fill="#c0c0c0"/>
<text x="436.02" y="452.97" text-anchor="middle" font-family="Liberation Sans, sans-serif" font-size="9.2" font-weight="bold" fill="#0a0a0a">13</text>
<rect x="443.20" y="461.60" width="4.3" height="2.60" fill="#cd5c5c"/>
<text x="446.75" y="458.80" text-anchor="middle" font-family="Liberation Sans, sans-serif" font-size="9.2" font-weight="bold" fill="#0a0a0a">4</text>
<rect x="453.94" y="462.90" width="4.3" height="1.30" fill="#d2691e"/>
<text x="457.49" y="460.10" text-anchor="middle" font-family="Liberation Sans, sans-serif" font-size="9.2" font-weight="bold" fill="#0a0a0a">2</text>
<rect x="464.67" y="423.33" width="4.3" height="40.87" fill="#dc143c"/>
<text x="468.22" y="420.53" text-anchor="middle" font-family="Liberation Sans, sans-serif" font-size="9.2" font-weight="bold" fill="#0a0a0a">63</text>
<rect x="475.41" y="460.96" width="4.3" height="3.24" fill="#ee82ee"/>
<text x="478.96" y="458.16" text-anchor="middle" font-family="Liberation Sans, sans-serif" font-size="9.2" font-weight="bold" fill="#0a0a0a">5</text>
<rect x="486.14" y="460.31" width="4.3" height="3.89" fill="#f4a460"/>
<text x="489.69" y="457.51" text-anchor="middle" font-family="Liberation Sans, sans-serif" font-size="9.2" font-weight="bold" fill="#0a0a0a">6</text>
<rect x="496.88" y="463.55" width="4.3" height="0.65" fill="#b22222"/>
<text x="500.43" y="460.75" text-anchor="middle" font-family="Liberation Sans, sans-serif" font-size="9.2" font-weight="bold" fill="#0a0a0a">1</text>
<rect x="507.61" y="462.90" width="4.3" height="1.30" fill="#c71585"/>
<text x="511.16" y="460.10" text-anchor="middle" font-family="Liberation Sans, sans-serif" font-size="9.2" font-weight="bold" fill="#0a0a0a">2</text>
<rect x="518.35" y="462.90" width="4.3" height="1.30" fill="#d2691e"/>
<text x="521.90" y="460.10" text-anchor="middle" font-family="Liberation Sans, sans-serif" font-size="9.2" font-weight="bold" fill="#0a0a0a">2</text>
<rect x="529.08" y="460.31" width="4.3" height="3.89" fill="#ff69b4"/>
<text x="532.63" y="457.51" text-anchor="middle" font-family="Liberation Sans, sans-serif" font-size="9.2" font-weight="bold" fill="#0a0a0a">6</text>
<rect x="539.81" y="462.90" width="4.3" height="1.30" fill="#ffa07a"/>
<text x="543.36" y="460.10" text-anchor="middle" font-family="Liberation Sans, sans-serif" font-size="9.2" font-weight="bold" fill="#0a0a0a">2</text>
<text x="554.10" y="461.40" text-anchor="middle" font-family="Liberation Sans, sans-serif" font-size="9.2" font-weight="bold" fill="#0a0a0a">0</text>
<text x="564.83" y="461.40" text-anchor="middle" font-family="Liberation Sans, sans-serif" font-size="9.2" font-weight="bold" fill="#0a0a0a">0</text>
<line x1="225.0" y1="301.5" x2="225.0" y2="464.7" stroke="#222" stroke-width="1"/>
<line x1="225.0" y1="464.2" x2="568.8" y2="464.2" stroke="#222" stroke-width="1.2"/>
<line x1="217.8" y1="464.20" x2="225.3" y2="464.20" stroke="#222" stroke-width="1"/>
<text x="214.70000000000002" y="467.50" text-anchor="end" font-family="Liberation Sans, sans-serif" font-size="8.4" fill="#111">0</text>
<line x1="217.8" y1="431.76" x2="225.3" y2="431.76" stroke="#222" stroke-width="1"/>
<text x="214.70000000000002" y="435.06" text-anchor="end" font-family="Liberation Sans, sans-serif" font-size="8.4" fill="#111">50</text>
<line x1="217.8" y1="399.32" x2="225.3" y2="399.32" stroke="#222" stroke-width="1"/>
<text x="214.70000000000002" y="402.62" text-anchor="end" font-family="Liberation Sans, sans-serif" font-size="8.4" fill="#111">100</text>
<line x1="217.8" y1="366.88" x2="225.3" y2="366.88" stroke="#222" stroke-width="1"/>
<text x="214.70000000000002" y="370.18" text-anchor="end" font-family="Liberation Sans, sans-serif" font-size="8.4" fill="#111">150</text>
<line x1="217.8" y1="334.44" x2="225.3" y2="334.44" stroke="#222" stroke-width="1"/>
<text x="214.70000000000002" y="337.74" text-anchor="end" font-family="Liberation Sans, sans-serif" font-size="8.4" fill="#111">200</text>
<line x1="217.8" y1="302.00" x2="225.3" y2="302.00" stroke="#222" stroke-width="1"/>
<text x="214.70000000000002" y="305.30" text-anchor="end" font-family="Liberation Sans, sans-serif" font-size="8.4" fill="#111">250</text>
<text transform="translate(193.4,382.6) rotate(-90)" text-anchor="middle" font-family="Liberation Sans, sans-serif" font-size="9" font-weight="bold" fill="#111">Count</text>
<text transform="translate(233.07,475.40) rotate(-45)" text-anchor="end" font-family="Liberation Sans, sans-serif" font-size="8.1" fill="#111">Bats</text>
<text transform="translate(254.54,475.40) rotate(-45)" text-anchor="end" font-family="Liberation Sans, sans-serif" font-size="8.1" fill="#111">Blue Tongue Lizard</text>
<text transform="translate(276.00,475.40) rotate(-45)" text-anchor="end" font-family="Liberation Sans, sans-serif" font-size="8.1" fill="#111">Crow</text>
<text transform="translate(297.47,475.40) rotate(-45)" text-anchor="end" font-family="Liberation Sans, sans-serif" font-size="8.1" fill="#111">ducks</text>
<text transform="translate(318.94,475.40) rotate(-45)" text-anchor="end" font-family="Liberation Sans, sans-serif" font-size="8.1" fill="#111">echidna</text>
<text transform="translate(340.41,475.40) rotate(-45)" text-anchor="end" font-family="Liberation Sans, sans-serif" font-size="8.1" fill="#111">Flying Fox</text>
<text transform="translate(361.88,475.40) rotate(-45)" text-anchor="end" font-family="Liberation Sans, sans-serif" font-size="8.1" fill="#111">Galah</text>
<text transform="translate(383.35,475.40) rotate(-45)" text-anchor="end" font-family="Liberation Sans, sans-serif" font-size="8.1" fill="#111">Indian Myna</text>
<text transform="translate(404.82,475.40) rotate(-45)" text-anchor="end" font-family="Liberation Sans, sans-serif" font-size="8.1" fill="#111">Magpie</text>
<text transform="translate(426.29,475.40) rotate(-45)" text-anchor="end" font-family="Liberation Sans, sans-serif" font-size="8.1" fill="#111">Owls</text>
<text transform="translate(447.75,475.40) rotate(-45)" text-anchor="end" font-family="Liberation Sans, sans-serif" font-size="8.1" fill="#111">Peacocks</text>
<text transform="translate(469.22,475.40) rotate(-45)" text-anchor="end" font-family="Liberation Sans, sans-serif" font-size="8.1" fill="#111">Pigeons</text>
<text transform="translate(490.69,475.40) rotate(-45)" text-anchor="end" font-family="Liberation Sans, sans-serif" font-size="8.1" fill="#111">plovers</text>
<text transform="translate(512.16,475.40) rotate(-45)" text-anchor="end" font-family="Liberation Sans, sans-serif" font-size="8.1" fill="#111">Silver gill</text>
<text transform="translate(533.63,475.40) rotate(-45)" text-anchor="end" font-family="Liberation Sans, sans-serif" font-size="8.1" fill="#111">Sparrow</text>
<text transform="translate(555.10,475.40) rotate(-45)" text-anchor="end" font-family="Liberation Sans, sans-serif" font-size="8.1" fill="#111">test</text>
</svg>
<div class="panel" style="left:433.20px;top:237.60px;width:402.80px;height:269.40px"><div class="ph" style="height:24.40px"></div></div>
<svg class="ic" style="left:439.29px;top:245.60px" width="11.43" height="10.00" viewBox="0 0 2048 1792"><path fill="#444" fill-rule="evenodd" d="M160 128 h1728 q66 0 113 47 t47 113 v1216 q0 66 -47 113 t-113 47 h-1728 q-66 0 -113 -47 t-47 -113 v-1216 q0 -66 47 -113 t113 -47 z M192 288 q-13 0 -22.500 9.500 t-9.500 22.500 v1152 q0 13 9.500 22.500 t22.500 9.500 h1664 q13 0 22.500 -9.500 t9.500 -22.500 v-1152 q0 -13 -9.500 -22.500 t-22.500 -9.500 z M352 1056 h288 v384 h-288 z M736 736 h288 v704 h-288 z M1120 896 h288 v544 h-288 z M1504 480 h288 v960 h-288 z"/></svg>
<div class="t" style="left:456.30px;top:246.83px;font-size:10.4px;color:#444;letter-spacing:0.304px;">Wildlife Movement Graph</div>
<svg class="ic" style="left:434.40px;top:263.20px" width="400.30" height="241.80" viewBox="598.4 294.2 400.30 241.80">
<path d="M858.70 415.00 A65.4 28.1 0 0 1 854.13 425.32 L854.13 441.82 A65.4 28.1 0 0 0 858.70 431.50 Z" fill="#00e1e1" stroke="#00e1e1" stroke-width="0.4"/>
<path d="M854.46 424.95 A65.4 28.1 0 0 1 852.82 426.65 L852.82 443.15 A65.4 28.1 0 0 0 854.46 441.45 Z" fill="#14af14" stroke="#14af14" stroke-width="0.4"/>
<path d="M853.19 426.29 A65.4 28.1 0 0 1 848.47 430.09 L848.47 446.59 A65.4 28.1 0 0 0 853.19 442.79 Z" fill="#48af8c" stroke="#48af8c" stroke-width="0.4"/>
<path d="M848.95 429.76 A65.4 28.1 0 0 1 843.04 433.24 L843.04 449.74 A65.4 28.1 0 0 0 848.95 446.26 Z" fill="#526272" stroke="#526272" stroke-width="0.4"/>
<path d="M843.63 432.94 A65.4 28.1 0 0 1 839.45 434.91 L839.45 451.41 A65.4 28.1 0 0 0 843.63 449.44 Z" fill="#4d2605" stroke="#4d2605" stroke-width="0.4"/>
<path d="M840.09 434.63 A65.4 28.1 0 0 1 816.61 441.25 L816.61 457.75 A65.4 28.1 0 0 0 840.09 451.13 Z" fill="#679dd0" stroke="#679dd0" stroke-width="0.4"/>
<path d="M817.46 441.11 A65.4 28.1 0 0 1 735.30 427.98 L735.30 444.48 A65.4 28.1 0 0 0 817.46 457.61 Z" fill="#4d2605" stroke="#4d2605" stroke-width="0.4"/>
<path d="M735.73 428.33 A65.4 28.1 0 0 1 730.48 422.81 L730.48 439.31 A65.4 28.1 0 0 0 735.73 444.83 Z" fill="#620062" stroke="#620062" stroke-width="0.4"/>
<path d="M730.74 423.19 A65.4 28.1 0 0 1 728.09 417.14 L728.09 433.64 A65.4 28.1 0 0 0 730.74 439.69 Z" fill="#6c0dc4" stroke="#6c0dc4" stroke-width="0.4"/>
<path d="M728.16 417.53 A65.4 28.1 0 0 1 727.90 415.00 L727.90 431.50 A65.4 28.1 0 0 0 728.16 434.03 Z" fill="#6d0000" stroke="#6d0000" stroke-width="0.4"/>
<path d="M793.3 415.0 L793.30 386.90 A65.4 28.1 0 0 1 814.25 388.38 Z" fill="#6b4423" stroke="#6b4423" stroke-width="0.7"/>
<path d="M793.3 415.0 L813.17 388.23 A65.4 28.1 0 0 1 827.29 390.99 Z" fill="#6b4423" stroke="#6b4423" stroke-width="0.7"/>
<path d="M793.3 415.0 L826.31 390.74 A65.4 28.1 0 0 1 832.85 392.62 Z" fill="#0000f5" stroke="#0000f5" stroke-width="0.7"/>
<path d="M793.3 415.0 L831.94 392.33 A65.4 28.1 0 0 1 842.02 396.26 Z" fill="#008000" stroke="#008000" stroke-width="0.7"/>
<path d="M793.3 415.0 L841.25 395.89 A65.4 28.1 0 0 1 854.05 425.41 Z" fill="#00ffff" stroke="#00ffff" stroke-width="0.7"/>
<path d="M793.3 415.0 L854.46 424.95 A65.4 28.1 0 0 1 852.72 426.74 Z" fill="#32cd32" stroke="#32cd32" stroke-width="0.7"/>
<path d="M793.3 415.0 L853.19 426.29 A65.4 28.1 0 0 1 848.34 430.17 Z" fill="#66cdaa" stroke="#66cdaa" stroke-width="0.7"/>
<path d="M793.3 415.0 L848.95 429.76 A65.4 28.1 0 0 1 842.89 433.32 Z" fill="#708090" stroke="#708090" stroke-width="0.7"/>
<path d="M793.3 415.0 L843.63 432.94 A65.4 28.1 0 0 1 839.29 434.98 Z" fill="#6b4423" stroke="#6b4423" stroke-width="0.7"/>
<path d="M793.3 415.0 L840.09 434.63 A65.4 28.1 0 0 1 816.40 441.29 Z" fill="#85bbee" stroke="#85bbee" stroke-width="0.7"/>
<path d="M793.3 415.0 L817.46 441.11 A65.4 28.1 0 0 1 735.19 427.89 Z" fill="#6b4423" stroke="#6b4423" stroke-width="0.7"/>
<path d="M793.3 415.0 L735.73 428.33 A65.4 28.1 0 0 1 730.42 422.72 Z" fill="#800080" stroke="#800080" stroke-width="0.7"/>
<path d="M793.3 415.0 L730.74 423.19 A65.4 28.1 0 0 1 728.07 417.04 Z" fill="#8a2be2" stroke="#8a2be2" stroke-width="0.7"/>
<path d="M793.3 415.0 L728.16 417.53 A65.4 28.1 0 0 1 730.07 407.83 Z" fill="#8b0000" stroke="#8b0000" stroke-width="0.7"/>
<path d="M793.3 415.0 L729.78 408.30 A65.4 28.1 0 0 1 736.39 401.15 Z" fill="#90ee90" stroke="#90ee90" stroke-width="0.7"/>
<path d="M793.3 415.0 L735.84 401.58 A65.4 28.1 0 0 1 746.46 395.39 Z" fill="#9acd32" stroke="#9acd32" stroke-width="0.7"/>
<path d="M793.3 415.0 L745.67 395.74 A65.4 28.1 0 0 1 748.17 394.66 Z" fill="#bc8f8f" stroke="#bc8f8f" stroke-width="0.7"/>
<path d="M793.3 415.0 L747.35 395.00 A65.4 28.1 0 0 1 752.89 392.90 Z" fill="#c0c0c0" stroke="#c0c0c0" stroke-width="0.7"/>
<path d="M793.3 415.0 L752.00 393.21 A65.4 28.1 0 0 1 754.42 392.40 Z" fill="#cd5c5c" stroke="#cd5c5c" stroke-width="0.7"/>
<path d="M793.3 415.0 L753.51 392.70 A65.4 28.1 0 0 1 755.20 392.16 Z" fill="#d2691e" stroke="#d2691e" stroke-width="0.7"/>
<path d="M793.3 415.0 L754.28 392.45 A65.4 28.1 0 0 1 782.95 387.25 Z" fill="#dc143c" stroke="#dc143c" stroke-width="0.7"/>
<path d="M793.3 415.0 L781.83 387.34 A65.4 28.1 0 0 1 785.33 387.11 Z" fill="#ee82ee" stroke="#ee82ee" stroke-width="0.7"/>
<path d="M793.3 415.0 L784.20 387.17 A65.4 28.1 0 0 1 788.20 386.99 Z" fill="#f4a460" stroke="#f4a460" stroke-width="0.7"/>
<path d="M793.3 415.0 L787.06 387.03 A65.4 28.1 0 0 1 788.68 386.97 Z" fill="#b22222" stroke="#b22222" stroke-width="0.7"/>
<path d="M793.3 415.0 L787.54 387.01 A65.4 28.1 0 0 1 789.64 386.94 Z" fill="#c71585" stroke="#c71585" stroke-width="0.7"/>
<path d="M793.3 415.0 L788.50 386.98 A65.4 28.1 0 0 1 790.60 386.92 Z" fill="#d2691e" stroke="#d2691e" stroke-width="0.7"/>
<path d="M793.3 415.0 L789.46 386.95 A65.4 28.1 0 0 1 793.48 386.90 Z" fill="#ff69b4" stroke="#ff69b4" stroke-width="0.7"/>
<path d="M793.3 415.0 L792.34 386.90 A65.4 28.1 0 0 1 793.30 386.90 Z" fill="#ffa07a" stroke="#ffa07a" stroke-width="0.7"/>
<polyline points="803.4,387.2 805.2,378.5 834.8,336.0" fill="none" stroke="#6b4423" stroke-width="0.9" stroke-opacity="0.85" stroke-linejoin="round"/>
<polyline points="819.9,389.3 823.6,383.0 860.5,354.3" fill="none" stroke="#6b4423" stroke-width="0.9" stroke-opacity="0.85" stroke-linejoin="round"/>
<polyline points="829.2,391.5 832.8,386.1 873.4,373.4" fill="none" stroke="#0000f5" stroke-width="0.9" stroke-opacity="0.85" stroke-linejoin="round"/>
<polyline points="836.8,394.0 841.1,389.2 881.1,392.2" fill="none" stroke="#008000" stroke-width="0.9" stroke-opacity="0.85" stroke-linejoin="round"/>
<polyline points="857.5,409.6 863.6,408.4 884.9,411.1" fill="none" stroke="#00ffff" stroke-width="0.9" stroke-opacity="0.85" stroke-linejoin="round"/>
<polyline points="851.2,428.1 858.8,431.4 882.8,429.9" fill="none" stroke="#66cdaa" stroke-width="0.9" stroke-opacity="0.85" stroke-linejoin="round"/>
<polyline points="846.4,431.4 852.0,435.5 877.6,449.1" fill="none" stroke="#708090" stroke-width="0.9" stroke-opacity="0.85" stroke-linejoin="round"/>
<polyline points="841.9,433.8 847.0,440.0 867.2,467.4" fill="none" stroke="#6b4423" stroke-width="0.9" stroke-opacity="0.85" stroke-linejoin="round"/>
<polyline points="829.6,438.4 833.0,446.0 848.4,485.6" fill="none" stroke="#85bbee" stroke-width="0.9" stroke-opacity="0.85" stroke-linejoin="round"/>
<polyline points="790.9,386.9 789.8,380.9 746.6,337.9" fill="none" stroke="#ff69b4" stroke-width="0.9" stroke-opacity="0.85" stroke-linejoin="round"/>
<polyline points="767.4,389.2 764.3,383.0 723.7,356.9" fill="none" stroke="#dc143c" stroke-width="0.9" stroke-opacity="0.85" stroke-linejoin="round"/>
<polyline points="749.6,394.1 746.6,391.3 710.7,375.5" fill="none" stroke="#c0c0c0" stroke-width="0.9" stroke-opacity="0.85" stroke-linejoin="round"/>
<polyline points="740.3,398.5 732.0,394.4 703.8,394.9" fill="none" stroke="#9acd32" stroke-width="0.9" stroke-opacity="0.85" stroke-linejoin="round"/>
<polyline points="732.3,404.9 725.7,403.2 701.8,413.6" fill="none" stroke="#90ee90" stroke-width="0.9" stroke-opacity="0.85" stroke-linejoin="round"/>
<polyline points="728.1,412.9 721.6,412.6 703.2,432.4" fill="none" stroke="#8b0000" stroke-width="0.9" stroke-opacity="0.85" stroke-linejoin="round"/>
<polyline points="729.1,420.4 722.6,421.4 709.5,451.2" fill="none" stroke="#8a2be2" stroke-width="0.9" stroke-opacity="0.85" stroke-linejoin="round"/>
<polyline points="732.9,425.8 726.4,427.2 721.6,469.5" fill="none" stroke="#800080" stroke-width="0.9" stroke-opacity="0.85" stroke-linejoin="round"/>
<polyline points="770.9,441.4 768.0,447.0 741.4,488.3" fill="none" stroke="#6b4423" stroke-width="0.9" stroke-opacity="0.85" stroke-linejoin="round"/>
<text x="842.8" y="341.8" font-family="Liberation Sans, sans-serif" font-size="8.4" font-weight="bold" fill="#111">Bats: 4.9 %</text>
<text x="868.2" y="360.4" font-family="Liberation Sans, sans-serif" font-size="8.4" font-weight="bold" fill="#111">Black gull: 3.5 %</text>
<text x="881.7" y="379.1" font-family="Liberation Sans, sans-serif" font-size="8.4" font-weight="bold" fill="#111">Blue Tongue Lizard: 1.6 %</text>
<text x="889" y="397.9" font-family="Liberation Sans, sans-serif" font-size="8.4" font-weight="bold" fill="#111">cockatoo: 3.0 %</text>
<text x="892.2" y="416.6" font-family="Liberation Sans, sans-serif" font-size="8.4" font-weight="bold" fill="#111">Crow: 17.7 %</text>
<text x="890.5" y="435.4" font-family="Liberation Sans, sans-serif" font-size="8.4" font-weight="bold" fill="#111">ducks: 2.2 %</text>
<text x="885.5" y="454.0" font-family="Liberation Sans, sans-serif" font-size="8.4" font-weight="bold" fill="#111">Eagle: 2.2 %</text>
<text x="874.9" y="472.6" font-family="Liberation Sans, sans-serif" font-size="8.4" font-weight="bold" fill="#111">echidna: 1.3 %</text>
<text x="856.3" y="491.3" font-family="Liberation Sans, sans-serif" font-size="8.4" font-weight="bold" fill="#111">Egret: 6.7 %</text>
<text x="738.9" y="343.8" text-anchor="end" font-family="Liberation Sans, sans-serif" font-size="8.4" font-weight="bold" fill="#111">Sparrow: 0.7 %</text>
<text x="715.3" y="362.5" text-anchor="end" font-family="Liberation Sans, sans-serif" font-size="8.4" font-weight="bold" fill="#111">Pigeons: 7.4 %</text>
<text x="702.8" y="381.2" text-anchor="end" font-family="Liberation Sans, sans-serif" font-size="8.4" font-weight="bold" fill="#111">Parrots: 1.5 %</text>
<text x="695.5" y="400.2" text-anchor="end" font-family="Liberation Sans, sans-serif" font-size="8.4" font-weight="bold" fill="#111">Magpie: 4.1 %</text>
<text x="694" y="419.0" text-anchor="end" font-family="Liberation Sans, sans-serif" font-size="8.4" font-weight="bold" fill="#111">Kite: 4.1 %</text>
<text x="695.1" y="437.6" text-anchor="end" font-family="Liberation Sans, sans-serif" font-size="8.4" font-weight="bold" fill="#111">Indian Myna: 5.3 %</text>
<text x="701.3" y="456.3" text-anchor="end" font-family="Liberation Sans, sans-serif" font-size="8.4" font-weight="bold" fill="#111">Heron: 3.3 %</text>
<text x="712.8" y="475.2" text-anchor="end" font-family="Liberation Sans, sans-serif" font-size="8.4" font-weight="bold" fill="#111">Gala: 3.2 %</text>
<text x="733.5" y="494.1" text-anchor="end" font-family="Liberation Sans, sans-serif" font-size="8.4" font-weight="bold" fill="#111">Flying Fox: 23.2 %</text>
</svg>
<div class="panel" style="left:10.00px;top:523.00px;width:826.00px;height:326.00px"><div class="ph" style="height:24.40px"></div></div>
<div class="t" style="left:18.40px;top:532.13px;font-size:10.4px;color:#444;letter-spacing:0.229px;">Wildlife Movement Log Details</div>
<div class="abs" style="left:20.80px;top:558.00px;width:804.80px;height:33.40px;background:#f5f5f5"></div>
<div class="abs" style="left:26.00px;top:562.80px;width:161.00px;height:23.80px;background:#fff;border:1px solid #cfcfcf;border-radius:2px"></div>
<div class="abs" style="left:26.00px;top:562.80px;width:25.00px;height:23.80px;background:#eee;border:1px solid #cfcfcf;border-radius:2px 0 0 2px"></div>
<svg class="ic" style="left:34.14px;top:569.80px;" width="8.91" height="9.60" viewBox="0 0 1664 1792"><path fill="#333" d="M1152 832C1152 1079 951 1280 704 1280C457 1280 256 1079 256 832C256 585 457 384 704 384C951 384 1152 585 1152 832ZM1664 1664C1664 1630 1650 1597 1627 1574L1284 1231C1365 1114 1408 974 1408 832C1408 443 1093 128 704 128C315 128 0 443 0 832C0 1221 315 1536 704 1536C846 1536 986 1493 1103 1412L1446 1754C1469 1778 1502 1792 1536 1792C1606 1792 1664 1734 1664 1664Z"/></svg>
<div class="abs" style="left:682.40px;top:562.80px;width:82.80px;height:23.80px;background:#f0f0f0;border:1px solid #a9a9a9;border-radius:2px"></div>
<div class="t" style="left:523.80px;width:400px;text-align:center;top:571.73px;font-size:7.15px;color:#222;letter-spacing:0.172px;">Show / hide columns</div>
<div class="abs" style="left:767.40px;top:562.80px;width:53.20px;height:23.80px;background:#fff;border:1px solid #7fb0dd"></div>
<div class="t" style="left:779.80px;top:570.43px;font-size:10.4px;color:#555;letter-spacing:0.163px;">25</div>
<svg class="ic" style="left:811px;top:572.4px" width="5" height="4.2" viewBox="0 0 6 5"><path fill="#333" d="M0 0 H6 L3 5 z"/></svg>
<div class="abs" style="left:21.00px;top:591.00px;width:804.60px;height:260px;overflow:hidden">
<div class="abs" style="left:0;top:0;width:21.70px;height:39.60px;background:#eeeeee"></div>
<div class="abs" style="left:0;top:0;width:900px;height:1px;background:#dddddd"></div>
<div class="abs" style="left:0;top:38px;width:900px;height:2px;background:#dddddd"></div>
<div class="abs" style="left:0;top:65px;width:900px;height:1px;background:#e5e5e5"></div>
<div class="abs" style="left:0;top:92px;width:900px;height:1px;background:#e5e5e5"></div>
<div class="abs" style="left:0;top:118px;width:900px;height:1px;background:#e5e5e5"></div>
<div class="abs" style="left:0;top:145px;width:900px;height:1px;background:#e5e5e5"></div>
<div class="abs" style="left:0;top:171px;width:900px;height:1px;background:#e5e5e5"></div>
<div class="abs" style="left:0;top:197px;width:900px;height:1px;background:#e5e5e5"></div>
<div class="abs" style="left:0;top:224px;width:900px;height:1px;background:#e5e5e5"></div>
<div class="abs" style="left:0;top:250px;width:900px;height:1px;background:#e5e5e5"></div>
<div class="abs" style="left:0;top:276px;width:900px;height:1px;background:#e5e5e5"></div>
<div class="abs" style="left:0px;top:0;width:1px;height:300px;background:#e5e5e5"></div>
<div class="abs" style="left:22px;top:0;width:1px;height:300px;background:#e5e5e5"></div>
<div class="abs" style="left:68px;top:0;width:1px;height:300px;background:#e5e5e5"></div>
<div class="abs" style="left:95px;top:0;width:1px;height:300px;background:#e5e5e5"></div>
<div class="abs" style="left:138px;top:0;width:1px;height:300px;background:#e5e5e5"></div>
<div class="abs" style="left:183px;top:0;width:1px;height:300px;background:#e5e5e5"></div>
<div class="abs" style="left:212px;top:0;width:1px;height:300px;background:#e5e5e5"></div>
<div class="abs" style="left:250px;top:0;width:1px;height:300px;background:#e5e5e5"></div>
<div class="abs" style="left:289px;top:0;width:1px;height:300px;background:#e5e5e5"></div>
<div class="abs" style="left:323px;top:0;width:1px;height:300px;background:#e5e5e5"></div>
<div class="abs" style="left:350px;top:0;width:1px;height:300px;background:#e5e5e5"></div>
<div class="abs" style="left:378px;top:0;width:1px;height:300px;background:#e5e5e5"></div>
<div class="abs" style="left:408px;top:0;width:1px;height:300px;background:#e5e5e5"></div>
<div class="abs" style="left:438px;top:0;width:1px;height:300px;background:#e5e5e5"></div>
<div class="abs" style="left:468px;top:0;width:1px;height:300px;background:#e5e5e5"></div>
<div class="abs" style="left:502px;top:0;width:1px;height:300px;background:#e5e5e5"></div>
<div class="abs" style="left:526px;top:0;width:1px;height:300px;background:#e5e5e5"></div>
<div class="abs" style="left:555px;top:0;width:1px;height:300px;background:#e5e5e5"></div>
<div class="abs" style="left:592px;top:0;width:1px;height:300px;background:#e5e5e5"></div>
<div class="abs" style="left:637px;top:0;width:1px;height:300px;background:#e5e5e5"></div>
<div class="abs" style="left:676px;top:0;width:1px;height:300px;background:#e5e5e5"></div>
<div class="abs" style="left:716px;top:0;width:1px;height:300px;background:#e5e5e5"></div>
<div class="abs" style="left:753px;top:0;width:1px;height:300px;background:#e5e5e5"></div>
<div class="abs" style="left:794px;top:0;width:1px;height:300px;background:#e5e5e5"></div>
<div class="abs" style="left:830px;top:0;width:1px;height:300px;background:#e5e5e5"></div>
<div class="t b" style="left:-48.15px;width:120px;text-align:center;top:15.69px;font-size:7.7px;line-height:10.47px;color:#333;letter-spacing:0.289px">Id</div>
<svg class="ic" style="left:9.95px;top:14.60px" width="7" height="10" viewBox="0 0 7 10"><path d="M0.600 4.200 L3.500 0.800 L6.400 4.200 M0.600 5.800 L3.500 9.200 L6.400 5.800" fill="none" stroke="#444" stroke-width="0.8"/></svg>
<div class="t b" style="left:-12.55px;width:120px;text-align:center;top:15.69px;font-size:7.7px;line-height:10.47px;color:#333;letter-spacing:0.388px">Date</div>
<svg class="ic" style="left:57.30px;top:15.60px" width="7" height="10" viewBox="0 0 7 10"><path d="M0.600 4.200 L3.500 0.800 L6.400 4.200 M0.600 5.800 L3.500 9.200 L6.400 5.800" fill="none" stroke="#c4c4c4" stroke-width="0.8"/></svg>
<div class="t b" style="left:24.35px;width:120px;text-align:center;top:15.69px;font-size:7.7px;line-height:10.47px;color:#333;letter-spacing:0.174px">Shift</div>
<svg class="ic" style="left:84.80px;top:15.60px" width="7" height="10" viewBox="0 0 7 10"><path d="M0.600 4.200 L3.500 0.800 L6.400 4.200 M0.600 5.800 L3.500 9.200 L6.400 5.800" fill="none" stroke="#c4c4c4" stroke-width="0.8"/></svg>
<div class="t b" style="left:59.40px;width:120px;text-align:center;top:15.69px;font-size:7.7px;line-height:10.47px;color:#333;letter-spacing:0.146px">Location</div>
<svg class="ic" style="left:127.40px;top:15.60px" width="7" height="10" viewBox="0 0 7 10"><path d="M0.600 4.200 L3.500 0.800 L6.400 4.200 M0.600 5.800 L3.500 9.200 L6.400 5.800" fill="none" stroke="#c4c4c4" stroke-width="0.8"/></svg>
<div class="t b" style="left:103.20px;width:120px;text-align:center;top:15.69px;font-size:7.7px;line-height:10.47px;color:#333;letter-spacing:0.245px">Direction</div>
<svg class="ic" style="left:172.40px;top:15.60px" width="7" height="10" viewBox="0 0 7 10"><path d="M0.600 4.200 L3.500 0.800 L6.400 4.200 M0.600 5.800 L3.500 9.200 L6.400 5.800" fill="none" stroke="#c4c4c4" stroke-width="0.8"/></svg>
<div class="t b" style="left:140.10px;width:120px;text-align:center;top:15.69px;font-size:7.7px;line-height:10.47px;color:#333;letter-spacing:0.272px">Time</div>
<svg class="ic" style="left:201.20px;top:15.60px" width="7" height="10" viewBox="0 0 7 10"><path d="M0.600 4.200 L3.500 0.800 L6.400 4.200 M0.600 5.800 L3.500 9.200 L6.400 5.800" fill="none" stroke="#c4c4c4" stroke-width="0.8"/></svg>
<div class="t b" style="left:173.85px;width:120px;text-align:center;top:15.69px;font-size:7.7px;line-height:10.47px;color:#333;letter-spacing:0.200px">Activity</div>
<svg class="ic" style="left:239.90px;top:15.60px" width="7" height="10" viewBox="0 0 7 10"><path d="M0.600 4.200 L3.500 0.800 L6.400 4.200 M0.600 5.800 L3.500 9.200 L6.400 5.800" fill="none" stroke="#c4c4c4" stroke-width="0.8"/></svg>
<div class="t b" style="left:212.60px;width:120px;text-align:center;top:10.53px;font-size:7.7px;line-height:10.47px;color:#333;letter-spacing:0.161px">Cleared<br>By</div>
<svg class="ic" style="left:278.70px;top:17.60px" width="7" height="10" viewBox="0 0 7 10"><path d="M0.600 4.200 L3.500 0.800 L6.400 4.200 M0.600 5.800 L3.500 9.200 L6.400 5.800" fill="none" stroke="#c4c4c4" stroke-width="0.8"/></svg>
<div class="t b" style="left:248.90px;width:120px;text-align:center;top:15.69px;font-size:7.7px;line-height:10.47px;color:#333;letter-spacing:0.304px">Heron</div>
<svg class="ic" style="left:312.50px;top:15.60px" width="7" height="10" viewBox="0 0 7 10"><path d="M0.600 4.200 L3.500 0.800 L6.400 4.200 M0.600 5.800 L3.500 9.200 L6.400 5.800" fill="none" stroke="#c4c4c4" stroke-width="0.8"/></svg>
<div class="t b" style="left:279.15px;width:120px;text-align:center;top:15.69px;font-size:7.7px;line-height:10.47px;color:#333;letter-spacing:0.076px">Bats</div>
<svg class="ic" style="left:339.20px;top:15.60px" width="7" height="10" viewBox="0 0 7 10"><path d="M0.600 4.200 L3.500 0.800 L6.400 4.200 M0.600 5.800 L3.500 9.200 L6.400 5.800" fill="none" stroke="#c4c4c4" stroke-width="0.8"/></svg>
<div class="t b" style="left:306.85px;width:120px;text-align:center;top:15.69px;font-size:7.7px;line-height:10.47px;color:#333;letter-spacing:0.128px">Crow</div>
<svg class="ic" style="left:367.90px;top:15.60px" width="7" height="10" viewBox="0 0 7 10"><path d="M0.600 4.200 L3.500 0.800 L6.400 4.200 M0.600 5.800 L3.500 9.200 L6.400 5.800" fill="none" stroke="#c4c4c4" stroke-width="0.8"/></svg>
<div class="t b" style="left:335.85px;width:120px;text-align:center;top:15.69px;font-size:7.7px;line-height:10.47px;color:#333;letter-spacing:-0.151px">Dogs</div>
<svg class="ic" style="left:397.20px;top:15.60px" width="7" height="10" viewBox="0 0 7 10"><path d="M0.600 4.200 L3.500 0.800 L6.400 4.200 M0.600 5.800 L3.500 9.200 L6.400 5.800" fill="none" stroke="#c4c4c4" stroke-width="0.8"/></svg>
<div class="t b" style="left:365.50px;width:120px;text-align:center;top:15.69px;font-size:7.7px;line-height:10.47px;color:#333;letter-spacing:-0.066px">Eagle</div>
<svg class="ic" style="left:427.20px;top:15.60px" width="7" height="10" viewBox="0 0 7 10"><path d="M0.600 4.200 L3.500 0.800 L6.400 4.200 M0.600 5.800 L3.500 9.200 L6.400 5.800" fill="none" stroke="#c4c4c4" stroke-width="0.8"/></svg>
<div class="t b" style="left:395.50px;width:120px;text-align:center;top:15.69px;font-size:7.7px;line-height:10.47px;color:#333;letter-spacing:0.074px">Egret</div>
<svg class="ic" style="left:457.20px;top:15.60px" width="7" height="10" viewBox="0 0 7 10"><path d="M0.600 4.200 L3.500 0.800 L6.400 4.200 M0.600 5.800 L3.500 9.200 L6.400 5.800" fill="none" stroke="#c4c4c4" stroke-width="0.8"/></svg>
<div class="t b" style="left:427.35px;width:120px;text-align:center;top:10.53px;font-size:7.7px;line-height:10.47px;color:#333;letter-spacing:0.417px">Indian<br>Myna</div>
<svg class="ic" style="left:490.90px;top:17.60px" width="7" height="10" viewBox="0 0 7 10"><path d="M0.600 4.200 L3.500 0.800 L6.400 4.200 M0.600 5.800 L3.500 9.200 L6.400 5.800" fill="none" stroke="#c4c4c4" stroke-width="0.8"/></svg>
<div class="t b" style="left:456.35px;width:120px;text-align:center;top:15.69px;font-size:7.7px;line-height:10.47px;color:#333;letter-spacing:0.202px">Kite</div>
<svg class="ic" style="left:515.20px;top:15.60px" width="7" height="10" viewBox="0 0 7 10"><path d="M0.600 4.200 L3.500 0.800 L6.400 4.200 M0.600 5.800 L3.500 9.200 L6.400 5.800" fill="none" stroke="#c4c4c4" stroke-width="0.8"/></svg>
<div class="t b" style="left:483.10px;width:120px;text-align:center;top:15.69px;font-size:7.7px;line-height:10.47px;color:#333;letter-spacing:0.124px">Owls</div>
<svg class="ic" style="left:544.40px;top:15.60px" width="7" height="10" viewBox="0 0 7 10"><path d="M0.600 4.200 L3.500 0.800 L6.400 4.200 M0.600 5.800 L3.500 9.200 L6.400 5.800" fill="none" stroke="#c4c4c4" stroke-width="0.8"/></svg>
<div class="t b" style="left:516.25px;width:120px;text-align:center;top:15.69px;font-size:7.7px;line-height:10.47px;color:#333;letter-spacing:0.208px">Parrots</div>
<svg class="ic" style="left:581.50px;top:15.60px" width="7" height="10" viewBox="0 0 7 10"><path d="M0.600 4.200 L3.500 0.800 L6.400 4.200 M0.600 5.800 L3.500 9.200 L6.400 5.800" fill="none" stroke="#c4c4c4" stroke-width="0.8"/></svg>
<div class="t b" style="left:557.10px;width:120px;text-align:center;top:15.69px;font-size:7.7px;line-height:10.47px;color:#333;letter-spacing:-0.026px">Peacocks</div>
<svg class="ic" style="left:626.10px;top:15.60px" width="7" height="10" viewBox="0 0 7 10"><path d="M0.600 4.200 L3.500 0.800 L6.400 4.200 M0.600 5.800 L3.500 9.200 L6.400 5.800" fill="none" stroke="#c4c4c4" stroke-width="0.8"/></svg>
<div class="t b" style="left:599.00px;width:120px;text-align:center;top:15.69px;font-size:7.7px;line-height:10.47px;color:#333;letter-spacing:-0.030px">Pigeons</div>
<svg class="ic" style="left:665.30px;top:15.60px" width="7" height="10" viewBox="0 0 7 10"><path d="M0.600 4.200 L3.500 0.800 L6.400 4.200 M0.600 5.800 L3.500 9.200 L6.400 5.800" fill="none" stroke="#c4c4c4" stroke-width="0.8"/></svg>
<div class="t b" style="left:638.80px;width:120px;text-align:center;top:15.69px;font-size:7.7px;line-height:10.47px;color:#333;letter-spacing:0.121px">Reptiles</div>
<svg class="ic" style="left:705.70px;top:15.60px" width="7" height="10" viewBox="0 0 7 10"><path d="M0.600 4.200 L3.500 0.800 L6.400 4.200 M0.600 5.800 L3.500 9.200 L6.400 5.800" fill="none" stroke="#c4c4c4" stroke-width="0.8"/></svg>
<div class="t b" style="left:677.35px;width:120px;text-align:center;top:15.69px;font-size:7.7px;line-height:10.47px;color:#333;letter-spacing:0.023px">Snakes</div>
<svg class="ic" style="left:742.40px;top:15.60px" width="7" height="10" viewBox="0 0 7 10"><path d="M0.600 4.200 L3.500 0.800 L6.400 4.200 M0.600 5.800 L3.500 9.200 L6.400 5.800" fill="none" stroke="#c4c4c4" stroke-width="0.8"/></svg>
<div class="t b" style="left:716.15px;width:120px;text-align:center;top:15.69px;font-size:7.7px;line-height:10.47px;color:#333;letter-spacing:0.187px">Sparrow</div>
<svg class="ic" style="left:783.30px;top:15.60px" width="7" height="10" viewBox="0 0 7 10"><path d="M0.600 4.200 L3.500 0.800 L6.400 4.200 M0.600 5.800 L3.500 9.200 L6.400 5.800" fill="none" stroke="#c4c4c4" stroke-width="0.8"/></svg>
<div class="t b" style="left:754.90px;width:120px;text-align:center;top:15.69px;font-size:7.7px;line-height:10.47px;color:#333;letter-spacing:0.178px">Galah</div>
<svg class="ic" style="left:819.90px;top:15.60px" width="7" height="10" viewBox="0 0 7 10"><path d="M0.600 4.200 L3.500 0.800 L6.400 4.200 M0.600 5.800 L3.500 9.200 L6.400 5.800" fill="none" stroke="#c4c4c4" stroke-width="0.8"/></svg>
<div class="t" style="left:-48.45px;width:120px;text-align:center;top:48.36px;font-size:7.7px;line-height:10.47px;color:#515151;letter-spacing:0.120px">5800</div>
<div class="t" style="left:-14.45px;width:120px;text-align:center;top:48.36px;font-size:7.7px;line-height:10.47px;color:#515151;letter-spacing:0.233px">06/08/2018</div>
<div class="t" style="left:22.45px;width:120px;text-align:center;top:48.36px;font-size:7.7px;line-height:10.47px;color:#515151;letter-spacing:-0.161px">B</div>
<div class="t" style="left:57.50px;width:120px;text-align:center;top:48.36px;font-size:7.7px;line-height:10.47px;color:#515151;letter-spacing:-0.009px">A10</div>
<div class="t" style="left:101.30px;width:120px;text-align:center;top:48.36px;font-size:7.7px;line-height:10.47px;color:#515151;letter-spacing:-0.254px">N-S</div>
<div class="t" style="left:138.20px;width:120px;text-align:center;top:48.36px;font-size:7.7px;line-height:10.47px;color:#515151;letter-spacing:0.073px">12:18</div>
<div class="t" style="left:171.95px;width:120px;text-align:center;top:43.21px;font-size:7.7px;line-height:10.47px;color:#515151;letter-spacing:0.068px">Flying<br>across</div>
<div class="t" style="left:247.20px;width:120px;text-align:center;top:48.36px;font-size:7.7px;line-height:10.47px;color:#515151;letter-spacing:0.120px">0</div>
<div class="t" style="left:277.45px;width:120px;text-align:center;top:48.36px;font-size:7.7px;line-height:10.47px;color:#515151;letter-spacing:0.120px">0</div>
<div class="t" style="left:305.15px;width:120px;text-align:center;top:48.36px;font-size:7.7px;line-height:10.47px;color:#515151;letter-spacing:0.120px">4</div>
<div class="t" style="left:334.15px;width:120px;text-align:center;top:48.36px;font-size:7.7px;line-height:10.47px;color:#515151;letter-spacing:0.120px">0</div>
<div class="t" style="left:363.80px;width:120px;text-align:center;top:48.36px;font-size:7.7px;line-height:10.47px;color:#515151;letter-spacing:0.120px">0</div>
<div class="t" style="left:393.80px;width:120px;text-align:center;top:48.36px;font-size:7.7px;line-height:10.47px;color:#515151;letter-spacing:0.120px">0</div>
<div class="t" style="left:425.65px;width:120px;text-align:center;top:48.36px;font-size:7.7px;line-height:10.47px;color:#515151;letter-spacing:0.120px">0</div>
<div class="t" style="left:454.65px;width:120px;text-align:center;top:48.36px;font-size:7.7px;line-height:10.47px;color:#515151;letter-spacing:0.120px">0</div>
<div class="t" style="left:481.40px;width:120px;text-align:center;top:48.36px;font-size:7.7px;line-height:10.47px;color:#515151;letter-spacing:0.120px">0</div>
<div class="t" style="left:514.55px;width:120px;text-align:center;top:48.36px;font-size:7.7px;line-height:10.47px;color:#515151;letter-spacing:0.120px">0</div>
<div class="t" style="left:555.40px;width:120px;text-align:center;top:48.36px;font-size:7.7px;line-height:10.47px;color:#515151;letter-spacing:0.120px">0</div>
<div class="t" style="left:597.30px;width:120px;text-align:center;top:48.36px;font-size:7.7px;line-height:10.47px;color:#515151;letter-spacing:0.120px">0</div>
<div class="t" style="left:637.10px;width:120px;text-align:center;top:48.36px;font-size:7.7px;line-height:10.47px;color:#515151;letter-spacing:0.120px">0</div>
<div class="t" style="left:675.65px;width:120px;text-align:center;top:48.36px;font-size:7.7px;line-height:10.47px;color:#515151;letter-spacing:0.120px">0</div>
<div class="t" style="left:714.45px;width:120px;text-align:center;top:48.36px;font-size:7.7px;line-height:10.47px;color:#515151;letter-spacing:0.120px">0</div>
<div class="t" style="left:753.20px;width:120px;text-align:center;top:48.36px;font-size:7.7px;line-height:10.47px;color:#515151;letter-spacing:0.120px">0</div>
<div class="t" style="left:-48.45px;width:120px;text-align:center;top:74.71px;font-size:7.7px;line-height:10.47px;color:#515151;letter-spacing:0.120px">5799</div>
<div class="t" style="left:-14.45px;width:120px;text-align:center;top:74.71px;font-size:7.7px;line-height:10.47px;color:#515151;letter-spacing:0.233px">03/08/2018</div>
<div class="t" style="left:22.45px;width:120px;text-align:center;top:74.71px;font-size:7.7px;line-height:10.47px;color:#515151;letter-spacing:-0.161px">B</div>
<div class="t" style="left:57.50px;width:120px;text-align:center;top:74.71px;font-size:7.7px;line-height:10.47px;color:#515151;letter-spacing:-0.009px">A10</div>
<div class="t" style="left:138.20px;width:120px;text-align:center;top:74.71px;font-size:7.7px;line-height:10.47px;color:#515151;letter-spacing:0.073px">14:51</div>
<div class="t" style="left:171.95px;width:120px;text-align:center;top:74.71px;font-size:7.7px;line-height:10.47px;color:#515151;letter-spacing:0.050px">Feeding</div>
<div class="t" style="left:247.20px;width:120px;text-align:center;top:74.71px;font-size:7.7px;line-height:10.47px;color:#515151;letter-spacing:0.120px">0</div>
<div class="t" style="left:277.45px;width:120px;text-align:center;top:74.71px;font-size:7.7px;line-height:10.47px;color:#515151;letter-spacing:0.120px">0</div>
<div class="t" style="left:305.15px;width:120px;text-align:center;top:74.71px;font-size:7.7px;line-height:10.47px;color:#515151;letter-spacing:0.120px">55</div>
<div class="t" style="left:334.15px;width:120px;text-align:center;top:74.71px;font-size:7.7px;line-height:10.47px;color:#515151;letter-spacing:0.120px">0</div>
<div class="t" style="left:363.80px;width:120px;text-align:center;top:74.71px;font-size:7.7px;line-height:10.47px;color:#515151;letter-spacing:0.120px">0</div>
<div class="t" style="left:393.80px;width:120px;text-align:center;top:74.71px;font-size:7.7px;line-height:10.47px;color:#515151;letter-spacing:0.120px">0</div>
<div class="t" style="left:425.65px;width:120px;text-align:center;top:74.71px;font-size:7.7px;line-height:10.47px;color:#515151;letter-spacing:0.120px">0</div>
<div class="t" style="left:454.65px;width:120px;text-align:center;top:74.71px;font-size:7.7px;line-height:10.47px;color:#515151;letter-spacing:0.120px">0</div>
<div class="t" style="left:481.40px;width:120px;text-align:center;top:74.71px;font-size:7.7px;line-height:10.47px;color:#515151;letter-spacing:0.120px">0</div>
<div class="t" style="left:514.55px;width:120px;text-align:center;top:74.71px;font-size:7.7px;line-height:10.47px;color:#515151;letter-spacing:0.120px">0</div>
<div class="t" style="left:555.40px;width:120px;text-align:center;top:74.71px;font-size:7.7px;line-height:10.47px;color:#515151;letter-spacing:0.120px">0</div>
<div class="t" style="left:597.30px;width:120px;text-align:center;top:74.71px;font-size:7.7px;line-height:10.47px;color:#515151;letter-spacing:0.120px">0</div>
<div class="t" style="left:637.10px;width:120px;text-align:center;top:74.71px;font-size:7.7px;line-height:10.47px;color:#515151;letter-spacing:0.120px">0</div>
<div class="t" style="left:675.65px;width:120px;text-align:center;top:74.71px;font-size:7.7px;line-height:10.47px;color:#515151;letter-spacing:0.120px">0</div>
<div class="t" style="left:714.45px;width:120px;text-align:center;top:74.71px;font-size:7.7px;line-height:10.47px;color:#515151;letter-spacing:0.120px">0</div>
<div class="t" style="left:753.20px;width:120px;text-align:center;top:74.71px;font-size:7.7px;line-height:10.47px;color:#515151;letter-spacing:0.120px">0</div>
<div class="t" style="left:-48.45px;width:120px;text-align:center;top:101.06px;font-size:7.7px;line-height:10.47px;color:#515151;letter-spacing:0.120px">5798</div>
<div class="t" style="left:-14.45px;width:120px;text-align:center;top:101.06px;font-size:7.7px;line-height:10.47px;color:#515151;letter-spacing:0.233px">03/08/2018</div>
<div class="t" style="left:22.45px;width:120px;text-align:center;top:101.06px;font-size:7.7px;line-height:10.47px;color:#515151;letter-spacing:-0.161px">B</div>
<div class="t" style="left:57.50px;width:120px;text-align:center;top:101.06px;font-size:7.7px;line-height:10.47px;color:#515151;letter-spacing:-0.009px">A10</div>
<div class="t" style="left:138.20px;width:120px;text-align:center;top:101.06px;font-size:7.7px;line-height:10.47px;color:#515151;letter-spacing:0.073px">14:51</div>
<div class="t" style="left:171.95px;width:120px;text-align:center;top:101.06px;font-size:7.7px;line-height:10.47px;color:#515151;letter-spacing:0.050px">Feeding</div>
<div class="t" style="left:247.20px;width:120px;text-align:center;top:101.06px;font-size:7.7px;line-height:10.47px;color:#515151;letter-spacing:0.120px">0</div>
<div class="t" style="left:277.45px;width:120px;text-align:center;top:101.06px;font-size:7.7px;line-height:10.47px;color:#515151;letter-spacing:0.120px">0</div>
<div class="t" style="left:305.15px;width:120px;text-align:center;top:101.06px;font-size:7.7px;line-height:10.47px;color:#515151;letter-spacing:0.120px">0</div>
<div class="t" style="left:334.15px;width:120px;text-align:center;top:101.06px;font-size:7.7px;line-height:10.47px;color:#515151;letter-spacing:0.120px">0</div>
<div class="t" style="left:363.80px;width:120px;text-align:center;top:101.06px;font-size:7.7px;line-height:10.47px;color:#515151;letter-spacing:0.120px">0</div>
<div class="t" style="left:393.80px;width:120px;text-align:center;top:101.06px;font-size:7.7px;line-height:10.47px;color:#515151;letter-spacing:0.120px">0</div>
<div class="t" style="left:425.65px;width:120px;text-align:center;top:101.06px;font-size:7.7px;line-height:10.47px;color:#515151;letter-spacing:0.120px">0</div>
<div class="t" style="left:454.65px;width:120px;text-align:center;top:101.06px;font-size:7.7px;line-height:10.47px;color:#515151;letter-spacing:0.120px">0</div>
<div class="t" style="left:481.40px;width:120px;text-align:center;top:101.06px;font-size:7.7px;line-height:10.47px;color:#515151;letter-spacing:0.120px">0</div>
<div class="t" style="left:514.55px;width:120px;text-align:center;top:101.06px;font-size:7.7px;line-height:10.47px;color:#515151;letter-spacing:0.120px">0</div>
<div class="t" style="left:555.40px;width:120px;text-align:center;top:101.06px;font-size:7.7px;line-height:10.47px;color:#515151;letter-spacing:0.120px">0</div>
<div class="t" style="left:597.30px;width:120px;text-align:center;top:101.06px;font-size:7.7px;line-height:10.47px;color:#515151;letter-spacing:0.120px">0</div>
<div class="t" style="left:637.10px;width:120px;text-align:center;top:101.06px;font-size:7.7px;line-height:10.47px;color:#515151;letter-spacing:0.120px">0</div>
<div class="t" style="left:675.65px;width:120px;text-align:center;top:101.06px;font-size:7.7px;line-height:10.47px;color:#515151;letter-spacing:0.120px">0</div>
<div class="t" style="left:714.45px;width:120px;text-align:center;top:101.06px;font-size:7.7px;line-height:10.47px;color:#515151;letter-spacing:0.120px">0</div>
<div class="t" style="left:753.20px;width:120px;text-align:center;top:101.06px;font-size:7.7px;line-height:10.47px;color:#515151;letter-spacing:0.120px">0</div>
<div class="t" style="left:-48.45px;width:120px;text-align:center;top:127.41px;font-size:7.7px;line-height:10.47px;color:#515151;letter-spacing:0.120px">5797</div>
<div class="t" style="left:-14.45px;width:120px;text-align:center;top:127.41px;font-size:7.7px;line-height:10.47px;color:#515151;letter-spacing:0.233px">03/08/2018</div>
<div class="t" style="left:22.45px;width:120px;text-align:center;top:127.41px;font-size:7.7px;line-height:10.47px;color:#515151;letter-spacing:-0.161px">B</div>
<div class="t" style="left:57.50px;width:120px;text-align:center;top:127.41px;font-size:7.7px;line-height:10.47px;color:#515151;letter-spacing:-0.073px">A1</div>
<div class="t" style="left:138.20px;width:120px;text-align:center;top:127.41px;font-size:7.7px;line-height:10.47px;color:#515151;letter-spacing:0.073px">14:44</div>
<div class="t" style="left:171.95px;width:120px;text-align:center;top:127.41px;font-size:7.7px;line-height:10.47px;color:#515151;letter-spacing:0.182px">Nesting</div>
<div class="t" style="left:247.20px;width:120px;text-align:center;top:127.41px;font-size:7.7px;line-height:10.47px;color:#515151;letter-spacing:0.120px">0</div>
<div class="t" style="left:277.45px;width:120px;text-align:center;top:127.41px;font-size:7.7px;line-height:10.47px;color:#515151;letter-spacing:0.120px">0</div>
<div class="t" style="left:305.15px;width:120px;text-align:center;top:127.41px;font-size:7.7px;line-height:10.47px;color:#515151;letter-spacing:0.120px">10</div>
<div class="t" style="left:334.15px;width:120px;text-align:center;top:127.41px;font-size:7.7px;line-height:10.47px;color:#515151;letter-spacing:0.120px">0</div>
<div class="t" style="left:363.80px;width:120px;text-align:center;top:127.41px;font-size:7.7px;line-height:10.47px;color:#515151;letter-spacing:0.120px">0</div>
<div class="t" style="left:393.80px;width:120px;text-align:center;top:127.41px;font-size:7.7px;line-height:10.47px;color:#515151;letter-spacing:0.120px">0</div>
<div class="t" style="left:425.65px;width:120px;text-align:center;top:127.41px;font-size:7.7px;line-height:10.47px;color:#515151;letter-spacing:0.120px">0</div>
<div class="t" style="left:454.65px;width:120px;text-align:center;top:127.41px;font-size:7.7px;line-height:10.47px;color:#515151;letter-spacing:0.120px">0</div>
<div class="t" style="left:481.40px;width:120px;text-align:center;top:127.41px;font-size:7.7px;line-height:10.47px;color:#515151;letter-spacing:0.120px">0</div>
<div class="t" style="left:514.55px;width:120px;text-align:center;top:127.41px;font-size:7.7px;line-height:10.47px;color:#515151;letter-spacing:0.120px">0</div>
<div class="t" style="left:555.40px;width:120px;text-align:center;top:127.41px;font-size:7.7px;line-height:10.47px;color:#515151;letter-spacing:0.120px">0</div>
<div class="t" style="left:597.30px;width:120px;text-align:center;top:127.41px;font-size:7.7px;line-height:10.47px;color:#515151;letter-spacing:0.120px">0</div>
<div class="t" style="left:637.10px;width:120px;text-align:center;top:127.41px;font-size:7.7px;line-height:10.47px;color:#515151;letter-spacing:0.120px">0</div>
<div class="t" style="left:675.65px;width:120px;text-align:center;top:127.41px;font-size:7.7px;line-height:10.47px;color:#515151;letter-spacing:0.120px">0</div>
<div class="t" style="left:714.45px;width:120px;text-align:center;top:127.41px;font-size:7.7px;line-height:10.47px;color:#515151;letter-spacing:0.120px">0</div>
<div class="t" style="left:753.20px;width:120px;text-align:center;top:127.41px;font-size:7.7px;line-height:10.47px;color:#515151;letter-spacing:0.120px">0</div>
<div class="t" style="left:-48.45px;width:120px;text-align:center;top:153.76px;font-size:7.7px;line-height:10.47px;color:#515151;letter-spacing:0.120px">5796</div>
<div class="t" style="left:-14.45px;width:120px;text-align:center;top:153.76px;font-size:7.7px;line-height:10.47px;color:#515151;letter-spacing:0.233px">03/08/2018</div>
<div class="t" style="left:22.45px;width:120px;text-align:center;top:153.76px;font-size:7.7px;line-height:10.47px;color:#515151;letter-spacing:-0.267px">A</div>
<div class="t" style="left:57.50px;width:120px;text-align:center;top:153.76px;font-size:7.7px;line-height:10.47px;color:#515151;letter-spacing:-0.073px">A9</div>
<div class="t" style="left:101.30px;width:120px;text-align:center;top:153.76px;font-size:7.7px;line-height:10.47px;color:#515151;letter-spacing:-0.321px">W-E</div>
<div class="t" style="left:138.20px;width:120px;text-align:center;top:153.76px;font-size:7.7px;line-height:10.47px;color:#515151;letter-spacing:0.073px">08:16</div>
<div class="t" style="left:171.95px;width:120px;text-align:center;top:153.76px;font-size:7.7px;line-height:10.47px;color:#515151;letter-spacing:0.207px">Hovering</div>
<div class="t" style="left:247.20px;width:120px;text-align:center;top:153.76px;font-size:7.7px;line-height:10.47px;color:#515151;letter-spacing:0.120px">0</div>
<div class="t" style="left:277.45px;width:120px;text-align:center;top:153.76px;font-size:7.7px;line-height:10.47px;color:#515151;letter-spacing:0.120px">0</div>
<div class="t" style="left:305.15px;width:120px;text-align:center;top:153.76px;font-size:7.7px;line-height:10.47px;color:#515151;letter-spacing:0.120px">0</div>
<div class="t" style="left:334.15px;width:120px;text-align:center;top:153.76px;font-size:7.7px;line-height:10.47px;color:#515151;letter-spacing:0.120px">0</div>
<div class="t" style="left:363.80px;width:120px;text-align:center;top:153.76px;font-size:7.7px;line-height:10.47px;color:#515151;letter-spacing:0.120px">0</div>
<div class="t" style="left:393.80px;width:120px;text-align:center;top:153.76px;font-size:7.7px;line-height:10.47px;color:#515151;letter-spacing:0.120px">0</div>
<div class="t" style="left:425.65px;width:120px;text-align:center;top:153.76px;font-size:7.7px;line-height:10.47px;color:#515151;letter-spacing:0.120px">0</div>
<div class="t" style="left:454.65px;width:120px;text-align:center;top:153.76px;font-size:7.7px;line-height:10.47px;color:#515151;letter-spacing:0.120px">0</div>
<div class="t" style="left:481.40px;width:120px;text-align:center;top:153.76px;font-size:7.7px;line-height:10.47px;color:#515151;letter-spacing:0.120px">0</div>
<div class="t" style="left:514.55px;width:120px;text-align:center;top:153.76px;font-size:7.7px;line-height:10.47px;color:#515151;letter-spacing:0.120px">0</div>
<div class="t" style="left:555.40px;width:120px;text-align:center;top:153.76px;font-size:7.7px;line-height:10.47px;color:#515151;letter-spacing:0.120px">0</div>
<div class="t" style="left:597.30px;width:120px;text-align:center;top:153.76px;font-size:7.7px;line-height:10.47px;color:#515151;letter-spacing:0.120px">0</div>
<div class="t" style="left:637.10px;width:120px;text-align:center;top:153.76px;font-size:7.7px;line-height:10.47px;color:#515151;letter-spacing:0.120px">0</div>
<div class="t" style="left:675.65px;width:120px;text-align:center;top:153.76px;font-size:7.7px;line-height:10.47px;color:#515151;letter-spacing:0.120px">0</div>
<div class="t" style="left:714.45px;width:120px;text-align:center;top:153.76px;font-size:7.7px;line-height:10.47px;color:#515151;letter-spacing:0.120px">0</div>
<div class="t" style="left:753.20px;width:120px;text-align:center;top:153.76px;font-size:7.7px;line-height:10.47px;color:#515151;letter-spacing:0.120px">0</div>
<div class="t" style="left:-48.45px;width:120px;text-align:center;top:180.11px;font-size:7.7px;line-height:10.47px;color:#515151;letter-spacing:0.120px">5795</div>
<div class="t" style="left:-14.45px;width:120px;text-align:center;top:180.11px;font-size:7.7px;line-height:10.47px;color:#515151;letter-spacing:0.233px">03/08/2018</div>
<div class="t" style="left:22.45px;width:120px;text-align:center;top:180.11px;font-size:7.7px;line-height:10.47px;color:#515151;letter-spacing:-0.267px">A</div>
<div class="t" style="left:57.50px;width:120px;text-align:center;top:180.11px;font-size:7.7px;line-height:10.47px;color:#515151;letter-spacing:-0.009px">A12</div>
<div class="t" style="left:101.30px;width:120px;text-align:center;top:180.11px;font-size:7.7px;line-height:10.47px;color:#515151;letter-spacing:-0.321px">W-E</div>
<div class="t" style="left:138.20px;width:120px;text-align:center;top:180.11px;font-size:7.7px;line-height:10.47px;color:#515151;letter-spacing:0.073px">08:07</div>
<div class="t" style="left:171.95px;width:120px;text-align:center;top:180.11px;font-size:7.7px;line-height:10.47px;color:#515151;letter-spacing:0.207px">Hovering</div>
<div class="t" style="left:247.20px;width:120px;text-align:center;top:180.11px;font-size:7.7px;line-height:10.47px;color:#515151;letter-spacing:0.120px">0</div>
<div class="t" style="left:277.45px;width:120px;text-align:center;top:180.11px;font-size:7.7px;line-height:10.47px;color:#515151;letter-spacing:0.120px">0</div>
<div class="t" style="left:305.15px;width:120px;text-align:center;top:180.11px;font-size:7.7px;line-height:10.47px;color:#515151;letter-spacing:0.120px">0</div>
<div class="t" style="left:334.15px;width:120px;text-align:center;top:180.11px;font-size:7.7px;line-height:10.47px;color:#515151;letter-spacing:0.120px">0</div>
<div class="t" style="left:363.80px;width:120px;text-align:center;top:180.11px;font-size:7.7px;line-height:10.47px;color:#515151;letter-spacing:0.120px">0</div>
<div class="t" style="left:393.80px;width:120px;text-align:center;top:180.11px;font-size:7.7px;line-height:10.47px;color:#515151;letter-spacing:0.120px">0</div>
<div class="t" style="left:425.65px;width:120px;text-align:center;top:180.11px;font-size:7.7px;line-height:10.47px;color:#515151;letter-spacing:0.120px">0</div>
<div class="t" style="left:454.65px;width:120px;text-align:center;top:180.11px;font-size:7.7px;line-height:10.47px;color:#515151;letter-spacing:0.120px">6</div>
<div class="t" style="left:481.40px;width:120px;text-align:center;top:180.11px;font-size:7.7px;line-height:10.47px;color:#515151;letter-spacing:0.120px">0</div>
<div class="t" style="left:514.55px;width:120px;text-align:center;top:180.11px;font-size:7.7px;line-height:10.47px;color:#515151;letter-spacing:0.120px">0</div>
<div class="t" style="left:555.40px;width:120px;text-align:center;top:180.11px;font-size:7.7px;line-height:10.47px;color:#515151;letter-spacing:0.120px">0</div>
<div class="t" style="left:597.30px;width:120px;text-align:center;top:180.11px;font-size:7.7px;line-height:10.47px;color:#515151;letter-spacing:0.120px">0</div>
<div class="t" style="left:637.10px;width:120px;text-align:center;top:180.11px;font-size:7.7px;line-height:10.47px;color:#515151;letter-spacing:0.120px">0</div>
<div class="t" style="left:675.65px;width:120px;text-align:center;top:180.11px;font-size:7.7px;line-height:10.47px;color:#515151;letter-spacing:0.120px">0</div>
<div class="t" style="left:714.45px;width:120px;text-align:center;top:180.11px;font-size:7.7px;line-height:10.47px;color:#515151;letter-spacing:0.120px">0</div>
<div class="t" style="left:753.20px;width:120px;text-align:center;top:180.11px;font-size:7.7px;line-height:10.47px;color:#515151;letter-spacing:0.120px">0</div>
<div class="t" style="left:-48.45px;width:120px;text-align:center;top:206.46px;font-size:7.7px;line-height:10.47px;color:#515151;letter-spacing:0.120px">5794</div>
<div class="t" style="left:-14.45px;width:120px;text-align:center;top:206.46px;font-size:7.7px;line-height:10.47px;color:#515151;letter-spacing:0.233px">03/08/2018</div>
<div class="t" style="left:22.45px;width:120px;text-align:center;top:206.46px;font-size:7.7px;line-height:10.47px;color:#515151;letter-spacing:-0.267px">A</div>
<div class="t" style="left:57.50px;width:120px;text-align:center;top:206.46px;font-size:7.7px;line-height:10.47px;color:#515151;letter-spacing:-0.073px">A6</div>
<div class="t" style="left:101.30px;width:120px;text-align:center;top:206.46px;font-size:7.7px;line-height:10.47px;color:#515151;letter-spacing:-0.254px">N-S</div>
<div class="t" style="left:138.20px;width:120px;text-align:center;top:206.46px;font-size:7.7px;line-height:10.47px;color:#515151;letter-spacing:0.073px">08:06</div>
<div class="t" style="left:171.95px;width:120px;text-align:center;top:206.46px;font-size:7.7px;line-height:10.47px;color:#515151;letter-spacing:0.207px">Hovering</div>
<div class="t" style="left:247.20px;width:120px;text-align:center;top:206.46px;font-size:7.7px;line-height:10.47px;color:#515151;letter-spacing:0.120px">0</div>
<div class="t" style="left:277.45px;width:120px;text-align:center;top:206.46px;font-size:7.7px;line-height:10.47px;color:#515151;letter-spacing:0.120px">0</div>
<div class="t" style="left:305.15px;width:120px;text-align:center;top:206.46px;font-size:7.7px;line-height:10.47px;color:#515151;letter-spacing:0.120px">14</div>
<div class="t" style="left:334.15px;width:120px;text-align:center;top:206.46px;font-size:7.7px;line-height:10.47px;color:#515151;letter-spacing:0.120px">0</div>
<div class="t" style="left:363.80px;width:120px;text-align:center;top:206.46px;font-size:7.7px;line-height:10.47px;color:#515151;letter-spacing:0.120px">0</div>
<div class="t" style="left:393.80px;width:120px;text-align:center;top:206.46px;font-size:7.7px;line-height:10.47px;color:#515151;letter-spacing:0.120px">0</div>
<div class="t" style="left:425.65px;width:120px;text-align:center;top:206.46px;font-size:7.7px;line-height:10.47px;color:#515151;letter-spacing:0.120px">0</div>
<div class="t" style="left:454.65px;width:120px;text-align:center;top:206.46px;font-size:7.7px;line-height:10.47px;color:#515151;letter-spacing:0.120px">0</div>
<div class="t" style="left:481.40px;width:120px;text-align:center;top:206.46px;font-size:7.7px;line-height:10.47px;color:#515151;letter-spacing:0.120px">0</div>
<div class="t" style="left:514.55px;width:120px;text-align:center;top:206.46px;font-size:7.7px;line-height:10.47px;color:#515151;letter-spacing:0.120px">0</div>
<div class="t" style="left:555.40px;width:120px;text-align:center;top:206.46px;font-size:7.7px;line-height:10.47px;color:#515151;letter-spacing:0.120px">0</div>
<div class="t" style="left:597.30px;width:120px;text-align:center;top:206.46px;font-size:7.7px;line-height:10.47px;color:#515151;letter-spacing:0.120px">0</div>
<div class="t" style="left:637.10px;width:120px;text-align:center;top:206.46px;font-size:7.7px;line-height:10.47px;color:#515151;letter-spacing:0.120px">0</div>
<div class="t" style="left:675.65px;width:120px;text-align:center;top:206.46px;font-size:7.7px;line-height:10.47px;color:#515151;letter-spacing:0.120px">0</div>
<div class="t" style="left:714.45px;width:120px;text-align:center;top:206.46px;font-size:7.7px;line-height:10.47px;color:#515151;letter-spacing:0.120px">0</div>
<div class="t" style="left:753.20px;width:120px;text-align:center;top:206.46px;font-size:7.7px;line-height:10.47px;color:#515151;letter-spacing:0.120px">0</div>
<div class="t" style="left:-48.45px;width:120px;text-align:center;top:232.81px;font-size:7.7px;line-height:10.47px;color:#515151;letter-spacing:0.120px">5793</div>
<div class="t" style="left:-14.45px;width:120px;text-align:center;top:232.81px;font-size:7.7px;line-height:10.47px;color:#515151;letter-spacing:0.233px">03/08/2018</div>
<div class="t" style="left:22.45px;width:120px;text-align:center;top:232.81px;font-size:7.7px;line-height:10.47px;color:#515151;letter-spacing:-0.267px">A</div>
<div class="t" style="left:57.50px;width:120px;text-align:center;top:232.81px;font-size:7.7px;line-height:10.47px;color:#515151;letter-spacing:-0.073px">A8</div>
<div class="t" style="left:101.30px;width:120px;text-align:center;top:232.81px;font-size:7.7px;line-height:10.47px;color:#515151;letter-spacing:-0.254px">S-N</div>
<div class="t" style="left:138.20px;width:120px;text-align:center;top:232.81px;font-size:7.7px;line-height:10.47px;color:#515151;letter-spacing:0.073px">07:03</div>
<div class="t" style="left:171.95px;width:120px;text-align:center;top:232.81px;font-size:7.7px;line-height:10.47px;color:#515151;letter-spacing:0.207px">Hovering</div>
<div class="t" style="left:247.20px;width:120px;text-align:center;top:232.81px;font-size:7.7px;line-height:10.47px;color:#515151;letter-spacing:0.120px">0</div>
<div class="t" style="left:277.45px;width:120px;text-align:center;top:232.81px;font-size:7.7px;line-height:10.47px;color:#515151;letter-spacing:0.120px">0</div>
<div class="t" style="left:305.15px;width:120px;text-align:center;top:232.81px;font-size:7.7px;line-height:10.47px;color:#515151;letter-spacing:0.120px">0</div>
<div class="t" style="left:334.15px;width:120px;text-align:center;top:232.81px;font-size:7.7px;line-height:10.47px;color:#515151;letter-spacing:0.120px">0</div>
<div class="t" style="left:363.80px;width:120px;text-align:center;top:232.81px;font-size:7.7px;line-height:10.47px;color:#515151;letter-spacing:0.120px">0</div>
<div class="t" style="left:393.80px;width:120px;text-align:center;top:232.81px;font-size:7.7px;line-height:10.47px;color:#515151;letter-spacing:0.120px">0</div>
<div class="t" style="left:425.65px;width:120px;text-align:center;top:232.81px;font-size:7.7px;line-height:10.47px;color:#515151;letter-spacing:0.120px">0</div>
<div class="t" style="left:454.65px;width:120px;text-align:center;top:232.81px;font-size:7.7px;line-height:10.47px;color:#515151;letter-spacing:0.120px">0</div>
<div class="t" style="left:481.40px;width:120px;text-align:center;top:232.81px;font-size:7.7px;line-height:10.47px;color:#515151;letter-spacing:0.120px">0</div>
<div class="t" style="left:514.55px;width:120px;text-align:center;top:232.81px;font-size:7.7px;line-height:10.47px;color:#515151;letter-spacing:0.120px">0</div>
<div class="t" style="left:555.40px;width:120px;text-align:center;top:232.81px;font-size:7.7px;line-height:10.47px;color:#515151;letter-spacing:0.120px">0</div>
<div class="t" style="left:597.30px;width:120px;text-align:center;top:232.81px;font-size:7.7px;line-height:10.47px;color:#515151;letter-spacing:0.120px">0</div>
<div class="t" style="left:637.10px;width:120px;text-align:center;top:232.81px;font-size:7.7px;line-height:10.47px;color:#515151;letter-spacing:0.120px">0</div>
<div class="t" style="left:675.65px;width:120px;text-align:center;top:232.81px;font-size:7.7px;line-height:10.47px;color:#515151;letter-spacing:0.120px">0</div>
<div class="t" style="left:714.45px;width:120px;text-align:center;top:232.81px;font-size:7.7px;line-height:10.47px;color:#515151;letter-spacing:0.120px">0</div>
<div class="t" style="left:753.20px;width:120px;text-align:center;top:232.81px;font-size:7.7px;line-height:10.47px;color:#515151;letter-spacing:0.120px">0</div>
</div>
</div>
</div></body></html>
